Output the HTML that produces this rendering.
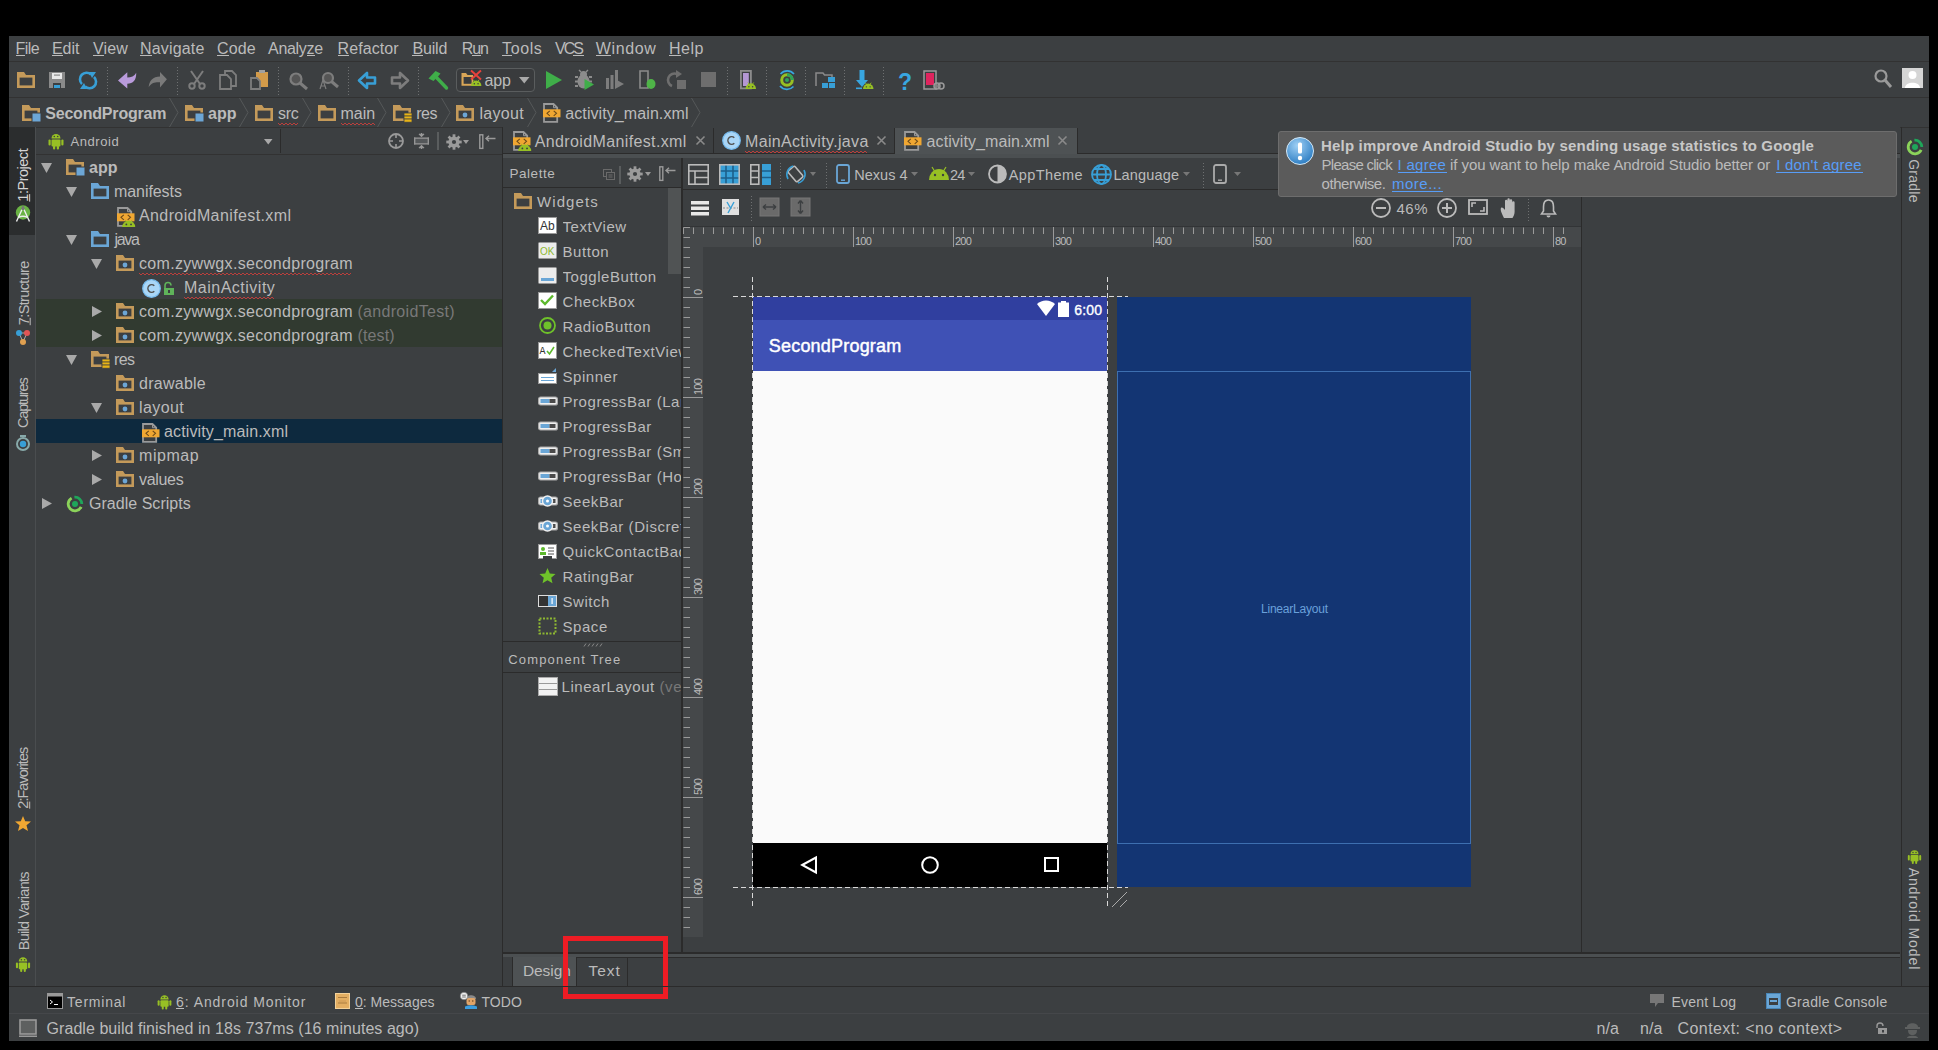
<!DOCTYPE html>
<html><head><meta charset="utf-8">
<style>
*{margin:0;padding:0;box-sizing:border-box}
html,body{width:1938px;height:1050px;overflow:hidden;background:#000}
body{font-family:"Liberation Sans",sans-serif;font-size:15px;color:#bbbbbb;position:relative}
.a{position:absolute}
.t{position:absolute;white-space:nowrap;line-height:1}
svg{overflow:visible}
</style></head><body>
<div class="a" style="left:9px;top:36px;width:1920px;height:1005px;background:#3c3f41;"></div>
<div class="a" style="left:9px;top:61px;width:1920px;height:1px;background:#323232;"></div>
<div class="a" style="left:9px;top:97px;width:1920px;height:1px;background:#323232;"></div>
<div class="a" style="left:9px;top:127px;width:1920px;height:1px;background:#323232;"></div>
<div class="t" style="left:15.50px;top:41.46px;font-size:16px;color:#bbbbbb;letter-spacing:-0.553px;">File</div>
<div class="a" style="left:15.5px;top:55px;width:9.8px;height:1px;background:#bbbbbb"></div>
<div class="t" style="left:52.00px;top:41.46px;font-size:16px;color:#bbbbbb;letter-spacing:-0.060px;">Edit</div>
<div class="a" style="left:52.0px;top:55px;width:10.7px;height:1px;background:#bbbbbb"></div>
<div class="t" style="left:93.00px;top:41.46px;font-size:16px;color:#bbbbbb;letter-spacing:0.113px;">View</div>
<div class="a" style="left:93.0px;top:55px;width:10.7px;height:1px;background:#bbbbbb"></div>
<div class="t" style="left:140.00px;top:41.46px;font-size:16px;color:#bbbbbb;letter-spacing:0.171px;">Navigate</div>
<div class="a" style="left:140.0px;top:55px;width:11.6px;height:1px;background:#bbbbbb"></div>
<div class="t" style="left:217.00px;top:41.46px;font-size:16px;color:#bbbbbb;letter-spacing:0.120px;">Code</div>
<div class="a" style="left:217.0px;top:55px;width:11.6px;height:1px;background:#bbbbbb"></div>
<div class="t" style="left:268.00px;top:41.46px;font-size:16px;color:#bbbbbb;letter-spacing:-0.293px;">Analyze</div>
<div class="a" style="left:306.6px;top:55px;width:8.0px;height:1px;background:#bbbbbb"></div>
<div class="t" style="left:337.50px;top:41.46px;font-size:16px;color:#bbbbbb;letter-spacing:0.089px;">Refactor</div>
<div class="a" style="left:337.5px;top:55px;width:11.6px;height:1px;background:#bbbbbb"></div>
<div class="t" style="left:412.40px;top:41.46px;font-size:16px;color:#bbbbbb;letter-spacing:-0.155px;">Build</div>
<div class="a" style="left:412.4px;top:55px;width:10.7px;height:1px;background:#bbbbbb"></div>
<div class="t" style="left:461.80px;top:41.46px;font-size:16px;color:#bbbbbb;letter-spacing:-1.140px;">Run</div>
<div class="a" style="left:472.2px;top:55px;width:8.9px;height:1px;background:#bbbbbb"></div>
<div class="t" style="left:502.00px;top:41.46px;font-size:16px;color:#bbbbbb;letter-spacing:0.630px;">Tools</div>
<div class="a" style="left:502.0px;top:55px;width:9.8px;height:1px;background:#bbbbbb"></div>
<div class="t" style="left:555.00px;top:41.46px;font-size:16px;color:#bbbbbb;letter-spacing:-2.030px;">VCS</div>
<div class="a" style="left:573.2px;top:55px;width:10.7px;height:1px;background:#bbbbbb"></div>
<div class="t" style="left:595.70px;top:41.46px;font-size:16px;color:#bbbbbb;letter-spacing:0.648px;">Window</div>
<div class="a" style="left:595.7px;top:55px;width:15.1px;height:1px;background:#bbbbbb"></div>
<div class="t" style="left:669.00px;top:41.46px;font-size:16px;color:#bbbbbb;letter-spacing:0.513px;">Help</div>
<div class="a" style="left:669.0px;top:55px;width:11.6px;height:1px;background:#bbbbbb"></div>
<svg class="a" style="left:17px;top:72px;" width="18" height="16" viewBox="0 0 18 16"><path d="M0,0 H7 L9,3 H18 V16 H0 Z" fill="#c49a5a"/><rect x="2.6" y="5.6" width="12.8" height="7.800000000000001" fill="#3c3f41"/></svg>
<svg class="a" style="left:49px;top:72px;" width="16" height="16" viewBox="0 0 16 16"><path d="M0,0 h16 v16 h-16 z" fill="#8a8a8a"/><rect x="3" y="1" width="10" height="6" fill="#e8e8e8"/><rect x="5" y="2.5" width="6" height="1.2" fill="#8a8a8a"/><rect x="4" y="11" width="8" height="5" fill="#3c3f41"/><rect x="5" y="13" width="6" height="3" fill="#389fd6"/></svg>
<svg class="a" style="left:79px;top:72px;" width="18" height="17" viewBox="0 0 18 17"><path d="M3,12 A6.5,6.5 0 0 1 12,2.5" fill="none" stroke="#389fd6" stroke-width="2.6"/><path d="M15,5 A6.5,6.5 0 0 1 6,14.5" fill="none" stroke="#389fd6" stroke-width="2.6"/><path d="M10,0 L17,0 L13,6 z" fill="#389fd6"/><path d="M8,17 L1,17 L5,11 z" fill="#389fd6"/></svg>
<svg class="a" style="left:107px;top:67px;" width="1" height="28" viewBox="0 0 1 28"><rect x="0" y="0" width="1" height="1" fill="#6e7071"/><rect x="0" y="3" width="1" height="1" fill="#6e7071"/><rect x="0" y="6" width="1" height="1" fill="#6e7071"/><rect x="0" y="9" width="1" height="1" fill="#6e7071"/><rect x="0" y="12" width="1" height="1" fill="#6e7071"/><rect x="0" y="15" width="1" height="1" fill="#6e7071"/><rect x="0" y="18" width="1" height="1" fill="#6e7071"/><rect x="0" y="21" width="1" height="1" fill="#6e7071"/><rect x="0" y="24" width="1" height="1" fill="#6e7071"/><rect x="0" y="27" width="1" height="1" fill="#6e7071"/></svg>
<svg class="a" style="left:118px;top:72px;" width="19" height="17" viewBox="0 0 19 17"><path d="M0,8.5 L9.3,0.3 V5.5 C13,5.5 16.5,4 18.2,0.7 C18.5,8 15,11.5 9.3,11.8 V16.4 Z" fill="#b99bdb"/></svg>
<svg class="a" style="left:148px;top:72px;" width="19" height="16" viewBox="0 0 19 16"><path d="M18.9,7.3 L12,0 V4.5 C5,4.5 1,9 0.7,15.3 C3,11 7,10 12,10.3 V15.5 Z" fill="#7a7a7a"/></svg>
<svg class="a" style="left:177px;top:67px;" width="1" height="28" viewBox="0 0 1 28"><rect x="0" y="0" width="1" height="1" fill="#6e7071"/><rect x="0" y="3" width="1" height="1" fill="#6e7071"/><rect x="0" y="6" width="1" height="1" fill="#6e7071"/><rect x="0" y="9" width="1" height="1" fill="#6e7071"/><rect x="0" y="12" width="1" height="1" fill="#6e7071"/><rect x="0" y="15" width="1" height="1" fill="#6e7071"/><rect x="0" y="18" width="1" height="1" fill="#6e7071"/><rect x="0" y="21" width="1" height="1" fill="#6e7071"/><rect x="0" y="24" width="1" height="1" fill="#6e7071"/><rect x="0" y="27" width="1" height="1" fill="#6e7071"/></svg>
<svg class="a" style="left:188px;top:71px;" width="18" height="19" viewBox="0 0 18 19"><g fill="none" stroke="#7d7d7d" stroke-width="2"><circle cx="4" cy="15" r="2.7"/><circle cx="14" cy="15" r="2.7"/><path d="M3,0 L12,13 M15,0 L6,13"/></g></svg>
<svg class="a" style="left:219px;top:70px;" width="19" height="20" viewBox="0 0 19 20"><g fill="#3c3f41" stroke="#7d7d7d" stroke-width="1.8"><path d="M6,1 h7 l4,4 v11 h-11 z"/><path d="M1,5 h7 l4,4 v10 h-11 z"/></g></svg>
<svg class="a" style="left:250px;top:70px;" width="18" height="20" viewBox="0 0 18 20"><rect x="6" y="2" width="12" height="15" fill="#d39b4a"/><rect x="9" y="0" width="6" height="3" fill="#a0a0a0"/><path d="M1,8 h6 l3,3 v8 h-9 z" fill="#3c3f41" stroke="#7d7d7d" stroke-width="1.8"/></svg>
<svg class="a" style="left:278px;top:67px;" width="1" height="28" viewBox="0 0 1 28"><rect x="0" y="0" width="1" height="1" fill="#6e7071"/><rect x="0" y="3" width="1" height="1" fill="#6e7071"/><rect x="0" y="6" width="1" height="1" fill="#6e7071"/><rect x="0" y="9" width="1" height="1" fill="#6e7071"/><rect x="0" y="12" width="1" height="1" fill="#6e7071"/><rect x="0" y="15" width="1" height="1" fill="#6e7071"/><rect x="0" y="18" width="1" height="1" fill="#6e7071"/><rect x="0" y="21" width="1" height="1" fill="#6e7071"/><rect x="0" y="24" width="1" height="1" fill="#6e7071"/><rect x="0" y="27" width="1" height="1" fill="#6e7071"/></svg>
<svg class="a" style="left:289px;top:72px;" width="19" height="17" viewBox="0 0 19 17"><circle cx="7" cy="7" r="5.5" fill="#555" stroke="#7d7d7d" stroke-width="2.2"/><path d="M11,11 L18,17" stroke="#7d7d7d" stroke-width="3"/></svg>
<svg class="a" style="left:319px;top:71px;" width="20" height="19" viewBox="0 0 20 19"><circle cx="9" cy="7" r="5" fill="#555" stroke="#7d7d7d" stroke-width="2.2"/><path d="M12.5,10.5 L19,16" stroke="#7d7d7d" stroke-width="3"/><path d="M1,18 L4,9 L7,18 M2.2,15 h3.6" fill="none" stroke="#7d7d7d" stroke-width="1.2"/></svg>
<svg class="a" style="left:348px;top:67px;" width="1" height="28" viewBox="0 0 1 28"><rect x="0" y="0" width="1" height="1" fill="#6e7071"/><rect x="0" y="3" width="1" height="1" fill="#6e7071"/><rect x="0" y="6" width="1" height="1" fill="#6e7071"/><rect x="0" y="9" width="1" height="1" fill="#6e7071"/><rect x="0" y="12" width="1" height="1" fill="#6e7071"/><rect x="0" y="15" width="1" height="1" fill="#6e7071"/><rect x="0" y="18" width="1" height="1" fill="#6e7071"/><rect x="0" y="21" width="1" height="1" fill="#6e7071"/><rect x="0" y="24" width="1" height="1" fill="#6e7071"/><rect x="0" y="27" width="1" height="1" fill="#6e7071"/></svg>
<svg class="a" style="left:359px;top:72px;" width="17" height="17" viewBox="0 0 17 17"><path d="M0,8.5 L8,1 V5.5 H16 V11.5 H8 V16 z" fill="none" stroke="#389fd6" stroke-width="2.6" stroke-linejoin="round"/></svg>
<svg class="a" style="left:391px;top:72px;" width="17" height="17" viewBox="0 0 17 17"><path d="M17,8.5 L9,1 V5.5 H1 V11.5 H9 V16 z" fill="none" stroke="#7d7d7d" stroke-width="2.6" stroke-linejoin="round"/></svg>
<svg class="a" style="left:418px;top:67px;" width="1" height="28" viewBox="0 0 1 28"><rect x="0" y="0" width="1" height="1" fill="#6e7071"/><rect x="0" y="3" width="1" height="1" fill="#6e7071"/><rect x="0" y="6" width="1" height="1" fill="#6e7071"/><rect x="0" y="9" width="1" height="1" fill="#6e7071"/><rect x="0" y="12" width="1" height="1" fill="#6e7071"/><rect x="0" y="15" width="1" height="1" fill="#6e7071"/><rect x="0" y="18" width="1" height="1" fill="#6e7071"/><rect x="0" y="21" width="1" height="1" fill="#6e7071"/><rect x="0" y="24" width="1" height="1" fill="#6e7071"/><rect x="0" y="27" width="1" height="1" fill="#6e7071"/></svg>
<svg class="a" style="left:428px;top:70px;" width="20" height="20" viewBox="0 0 20 20"><path d="M0.5,8.5 L7.5,1 L12.5,3.5 L10,6.5 L5.5,11 Z" fill="#3fae49"/><path d="M8.5,7.5 L18.5,18" stroke="#3fae49" stroke-width="3.4" stroke-linecap="round"/></svg>
<div class="a" style="left:456px;top:68px;width:79px;height:24px;border:1px solid #5a5d5e;border-radius:4px;background:#393b3d"></div>
<svg class="a" style="left:461px;top:70px;" width="21" height="17" viewBox="0 0 21 17"><path d="M0.5,3 H5 L6.5,5 H12 V15.8 H0.5 Z" fill="#d9a657"/><rect x="2.6" y="7" width="8" height="6.8" fill="#393b3d"/><path d="M10,16.0 A5.2,5.5 0 0 1 20.4,16.0 Z" fill="#97c024"/><path d="M12.288,9.7 L13.536000000000001,11.5 M18.112000000000002,9.7 L16.864,11.5" stroke="#97c024" stroke-width="0.9"/><circle cx="13.328" cy="13.8" r="0.7280000000000001" fill="#393b3d"/><circle cx="17.072000000000003" cy="13.8" r="0.7280000000000001" fill="#393b3d"/><path d="M10,0.5 L20,9.5 M20,0.5 L10,9.5" stroke="#e8413c" stroke-width="1.9"/></svg>
<div class="t" style="left:484.40px;top:73.46px;font-size:16px;color:#bbbbbb;letter-spacing:-0.060px;">app</div>
<svg class="a" style="left:519px;top:77px;" width="10.5" height="6.5" viewBox="0 0 10.5 6.5"><path d="M0,0 H10.5 L5.25,6.5 z" fill="#a9a9a9"/></svg>
<svg class="a" style="left:546px;top:71px;" width="16" height="18" viewBox="0 0 16 18"><path d="M0,0 L16,9 L0,18 z" fill="#3fae49"/></svg>
<svg class="a" style="left:575px;top:70px;" width="20" height="20" viewBox="0 0 20 20"><circle cx="8.5" cy="4.5" r="3.5" fill="#8c8c8c"/><ellipse cx="8.5" cy="11.5" rx="6" ry="7" fill="#8c8c8c"/><g fill="#8c8c8c"><rect x="0" y="6" width="3" height="2"/><rect x="0" y="10.5" width="3" height="2"/><rect x="0" y="15" width="3" height="2"/><rect x="14" y="6" width="3" height="2"/><rect x="14" y="10.5" width="3" height="2"/></g><path d="M4,0 L6,2 M13,0 L11,2" stroke="#8c8c8c" stroke-width="1.4"/><path d="M9.5,9 L19,14.5 L9.5,20 Z" fill="#3fae49"/></svg>
<svg class="a" style="left:606px;top:70px;" width="18" height="20" viewBox="0 0 18 20"><g fill="#7d7d7d"><rect x="0" y="8" width="3" height="11"/><rect x="4.5" y="5" width="3" height="14"/><rect x="9" y="0" width="3" height="12"/><path d="M9,9 L18,14 L9,19 z"/></g></svg>
<svg class="a" style="left:639px;top:70px;" width="17" height="20" viewBox="0 0 17 20"><path d="M1,1 h8 v17 h-8 z" fill="none" stroke="#8a8a8a" stroke-width="1.6"/><ellipse cx="12" cy="14" rx="4.5" ry="5" fill="#4fb448"/></svg>
<svg class="a" style="left:668px;top:70px;" width="19" height="20" viewBox="0 0 19 20"><path d="M9,4 A6,6 0 1 0 4,16" fill="none" stroke="#6e6e6e" stroke-width="2.6"/><path d="M8,0 L14,4 L8,8 z" fill="#6e6e6e"/><rect x="9" y="10" width="9" height="9" fill="#6e6e6e"/></svg>
<svg class="a" style="left:701px;top:72px;" width="15" height="15" viewBox="0 0 15 15"><rect width="15" height="15" fill="#6e6e6e"/></svg>
<svg class="a" style="left:727px;top:67px;" width="1" height="28" viewBox="0 0 1 28"><rect x="0" y="0" width="1" height="1" fill="#6e7071"/><rect x="0" y="3" width="1" height="1" fill="#6e7071"/><rect x="0" y="6" width="1" height="1" fill="#6e7071"/><rect x="0" y="9" width="1" height="1" fill="#6e7071"/><rect x="0" y="12" width="1" height="1" fill="#6e7071"/><rect x="0" y="15" width="1" height="1" fill="#6e7071"/><rect x="0" y="18" width="1" height="1" fill="#6e7071"/><rect x="0" y="21" width="1" height="1" fill="#6e7071"/><rect x="0" y="24" width="1" height="1" fill="#6e7071"/><rect x="0" y="27" width="1" height="1" fill="#6e7071"/></svg>
<svg class="a" style="left:740px;top:70px;" width="17" height="20" viewBox="0 0 17 20"><rect x="0.9" y="0.9" width="10" height="17.5" fill="#3c3f41" stroke="#8c8c8c" stroke-width="1.8"/><rect x="3" y="3" width="5.8" height="13" fill="#b497d4"/><path d="M5.5,18.9 A5.25,5.6 0 0 1 16.0,18.9 Z" fill="#97c024"/><path d="M7.8100000000000005,12.5 L9.07,14.3 M13.69,12.5 L12.43,14.3" stroke="#97c024" stroke-width="0.9"/><circle cx="8.86" cy="16.66" r="0.7350000000000001" fill="#3c3f41"/><circle cx="12.64" cy="16.66" r="0.7350000000000001" fill="#3c3f41"/></svg>
<svg class="a" style="left:766px;top:67px;" width="1" height="28" viewBox="0 0 1 28"><rect x="0" y="0" width="1" height="1" fill="#6e7071"/><rect x="0" y="3" width="1" height="1" fill="#6e7071"/><rect x="0" y="6" width="1" height="1" fill="#6e7071"/><rect x="0" y="9" width="1" height="1" fill="#6e7071"/><rect x="0" y="12" width="1" height="1" fill="#6e7071"/><rect x="0" y="15" width="1" height="1" fill="#6e7071"/><rect x="0" y="18" width="1" height="1" fill="#6e7071"/><rect x="0" y="21" width="1" height="1" fill="#6e7071"/><rect x="0" y="24" width="1" height="1" fill="#6e7071"/><rect x="0" y="27" width="1" height="1" fill="#6e7071"/></svg>
<svg class="a" style="left:778px;top:70px;" width="18" height="20" viewBox="0 0 18 20"><path d="M2.5,4 A9,9 0 0 1 16,4" fill="none" stroke="#38a6e0" stroke-width="1.7"/><path d="M2,16 A9,9 0 0 0 15.5,16.5" fill="none" stroke="#38a6e0" stroke-width="1.7"/><circle cx="9" cy="10" r="5.3" fill="none" stroke="#97c024" stroke-width="3"/><path d="M9,4.7 A5.3,5.3 0 0 1 14.3,10" fill="none" stroke="#2ea35a" stroke-width="3"/><circle cx="9" cy="10" r="2" fill="#2ea35a"/></svg>
<svg class="a" style="left:805px;top:67px;" width="1" height="28" viewBox="0 0 1 28"><rect x="0" y="0" width="1" height="1" fill="#6e7071"/><rect x="0" y="3" width="1" height="1" fill="#6e7071"/><rect x="0" y="6" width="1" height="1" fill="#6e7071"/><rect x="0" y="9" width="1" height="1" fill="#6e7071"/><rect x="0" y="12" width="1" height="1" fill="#6e7071"/><rect x="0" y="15" width="1" height="1" fill="#6e7071"/><rect x="0" y="18" width="1" height="1" fill="#6e7071"/><rect x="0" y="21" width="1" height="1" fill="#6e7071"/><rect x="0" y="24" width="1" height="1" fill="#6e7071"/><rect x="0" y="27" width="1" height="1" fill="#6e7071"/></svg>
<svg class="a" style="left:815px;top:72px;" width="21" height="16" viewBox="0 0 21 16"><path d="M1,14 V1 H8 L9.5,3 H17 V6" fill="none" stroke="#8a8a8a" stroke-width="1.5"/><g fill="#389fd6"><rect x="13" y="5" width="7" height="5"/><rect x="7" y="11" width="6" height="5"/><rect x="14" y="11" width="6" height="5"/></g></svg>
<svg class="a" style="left:844px;top:67px;" width="1" height="28" viewBox="0 0 1 28"><rect x="0" y="0" width="1" height="1" fill="#6e7071"/><rect x="0" y="3" width="1" height="1" fill="#6e7071"/><rect x="0" y="6" width="1" height="1" fill="#6e7071"/><rect x="0" y="9" width="1" height="1" fill="#6e7071"/><rect x="0" y="12" width="1" height="1" fill="#6e7071"/><rect x="0" y="15" width="1" height="1" fill="#6e7071"/><rect x="0" y="18" width="1" height="1" fill="#6e7071"/><rect x="0" y="21" width="1" height="1" fill="#6e7071"/><rect x="0" y="24" width="1" height="1" fill="#6e7071"/><rect x="0" y="27" width="1" height="1" fill="#6e7071"/></svg>
<svg class="a" style="left:856px;top:70px;" width="18" height="20" viewBox="0 0 18 20"><path d="M3.5,0 H8.5 V10 H12 L6,17 L0,10 H3.5 Z" fill="#38a6e0"/><rect x="0" y="17.5" width="6" height="1.6" fill="#38a6e0"/><path d="M7,19.1 A5.25,5.6 0 0 1 17.5,19.1 Z" fill="#97c024"/><path d="M9.31,12.7 L10.57,14.5 M15.19,12.7 L13.93,14.5" stroke="#97c024" stroke-width="0.9"/><circle cx="10.36" cy="16.86" r="0.7350000000000001" fill="#3c3f41"/><circle cx="14.14" cy="16.86" r="0.7350000000000001" fill="#3c3f41"/></svg>
<svg class="a" style="left:883px;top:67px;" width="1" height="28" viewBox="0 0 1 28"><rect x="0" y="0" width="1" height="1" fill="#6e7071"/><rect x="0" y="3" width="1" height="1" fill="#6e7071"/><rect x="0" y="6" width="1" height="1" fill="#6e7071"/><rect x="0" y="9" width="1" height="1" fill="#6e7071"/><rect x="0" y="12" width="1" height="1" fill="#6e7071"/><rect x="0" y="15" width="1" height="1" fill="#6e7071"/><rect x="0" y="18" width="1" height="1" fill="#6e7071"/><rect x="0" y="21" width="1" height="1" fill="#6e7071"/><rect x="0" y="24" width="1" height="1" fill="#6e7071"/><rect x="0" y="27" width="1" height="1" fill="#6e7071"/></svg>
<div class="t" style="left:898.00px;top:70.53px;font-size:23px;color:#38a6e0;letter-spacing:-2.530px;font-weight:bold;">?</div>
<svg class="a" style="left:923px;top:70px;" width="21" height="20" viewBox="0 0 21 20"><rect x="1" y="1" width="12" height="18" fill="#3c3f41" stroke="#9a9a9a" stroke-width="1.5"/><rect x="3" y="3" width="8" height="12" fill="#e0245e"/><circle cx="14" cy="16" r="3" fill="none" stroke="#9a9a9a" stroke-width="1.5"/><circle cx="18" cy="16" r="3" fill="none" stroke="#9a9a9a" stroke-width="1.5"/></svg>
<svg class="a" style="left:1874px;top:69px;" width="18" height="19" viewBox="0 0 18 19"><circle cx="7" cy="7" r="5.5" fill="none" stroke="#9a9a9a" stroke-width="2.2"/><path d="M11,11 L17,18" stroke="#9a9a9a" stroke-width="3"/></svg>
<svg class="a" style="left:1902px;top:68px;" width="21" height="20" viewBox="0 0 21 20"><rect width="21" height="20" fill="#d5d5d5"/><circle cx="10.5" cy="7" r="4" fill="#fff"/><path d="M3,20 C3,13 18,13 18,20 z" fill="#fff"/></svg>
<svg class="a" style="left:22px;top:105px;" width="18" height="16" viewBox="0 0 18 16"><path d="M0,0 H7 L9,3 H18 V16 H0 Z" fill="#c49a5a"/><rect x="2.6" y="5.6" width="12.8" height="7.800000000000001" fill="#3c3f41"/><rect x="10" y="8" width="9" height="9" fill="#6ca6d6" stroke="#3c3f41" stroke-width="1"/></svg>
<div class="t" style="left:45.20px;top:106.46px;font-size:16px;color:#bbbbbb;letter-spacing:-0.185px;font-weight:bold;">SecondProgram</div>
<svg class="a" style="left:169px;top:98px;" width="10" height="29" viewBox="0 0 10 29"><path d="M0.5,0 L9,14.5 L0.5,29" fill="none" stroke="#555859" stroke-width="1"/></svg>
<svg class="a" style="left:185px;top:105px;" width="18" height="16" viewBox="0 0 18 16"><path d="M0,0 H7 L9,3 H18 V16 H0 Z" fill="#c49a5a"/><rect x="2.6" y="5.6" width="12.8" height="7.800000000000001" fill="#3c3f41"/><rect x="10" y="8" width="9" height="9" fill="#6ca6d6" stroke="#3c3f41" stroke-width="1"/></svg>
<div class="t" style="left:208.00px;top:106.46px;font-size:16px;color:#bbbbbb;letter-spacing:0.060px;font-weight:bold;">app</div>
<svg class="a" style="left:239px;top:98px;" width="10" height="29" viewBox="0 0 10 29"><path d="M0.5,0 L9,14.5 L0.5,29" fill="none" stroke="#555859" stroke-width="1"/></svg>
<svg class="a" style="left:255px;top:105px;" width="18" height="16" viewBox="0 0 18 16"><path d="M0,0 H7 L9,3 H18 V16 H0 Z" fill="#c49a5a"/><rect x="2.6" y="5.6" width="12.8" height="7.800000000000001" fill="#3c3f41"/></svg>
<div class="t" style="left:278.00px;top:106.46px;font-size:16px;color:#bbbbbb;letter-spacing:-0.240px;">src</div>
<svg class="a" style="left:278.0px;top:123px" width="23" height="3"><polyline points="0.0,0 2.0,2 4.0,0 6.0,2 8.0,0 10.0,2 12.0,0 14.0,2 16.0,0 18.0,2 20.0,0" fill="none" stroke="#bc3f3c" stroke-width="1"/></svg>
<svg class="a" style="left:301.5px;top:98px;" width="10" height="29" viewBox="0 0 10 29"><path d="M0.5,0 L9,14.5 L0.5,29" fill="none" stroke="#555859" stroke-width="1"/></svg>
<svg class="a" style="left:317.5px;top:105px;" width="18" height="16" viewBox="0 0 18 16"><path d="M0,0 H7 L9,3 H18 V16 H0 Z" fill="#c49a5a"/><rect x="2.6" y="5.6" width="12.8" height="7.800000000000001" fill="#3c3f41"/></svg>
<div class="t" style="left:340.60px;top:106.46px;font-size:16px;color:#bbbbbb;letter-spacing:-0.073px;">main</div>
<svg class="a" style="left:340.6px;top:123px" width="36" height="3"><polyline points="0.0,0 2.0,2 4.0,0 6.0,2 8.0,0 10.0,2 12.0,0 14.0,2 16.0,0 18.0,2 20.0,0 22.0,2 24.0,0 26.0,2 28.0,0 30.0,2 32.0,0 34.0,2" fill="none" stroke="#bc3f3c" stroke-width="1"/></svg>
<svg class="a" style="left:377px;top:98px;" width="10" height="29" viewBox="0 0 10 29"><path d="M0.5,0 L9,14.5 L0.5,29" fill="none" stroke="#555859" stroke-width="1"/></svg>
<svg class="a" style="left:393px;top:105px;" width="18" height="16" viewBox="0 0 18 16"><path d="M0,0 H7 L9,3 H18 V16 H0 Z" fill="#c49a5a"/><rect x="2.6" y="5.6" width="12.8" height="7.800000000000001" fill="#3c3f41"/><g fill="#e8b416" stroke="#3c3f41" stroke-width="0.8"><rect x="11" y="8" width="8" height="3.2"/><rect x="11" y="11" width="8" height="3.2"/><rect x="11" y="14" width="8" height="3.2"/></g></svg>
<div class="t" style="left:416.30px;top:106.46px;font-size:16px;color:#bbbbbb;letter-spacing:-0.520px;">res</div>
<svg class="a" style="left:441px;top:98px;" width="10" height="29" viewBox="0 0 10 29"><path d="M0.5,0 L9,14.5 L0.5,29" fill="none" stroke="#555859" stroke-width="1"/></svg>
<svg class="a" style="left:455.5px;top:105px;" width="18" height="16" viewBox="0 0 18 16"><path d="M0,0 H7 L9,3 H18 V16 H0 Z" fill="#c49a5a"/><rect x="2.6" y="5.6" width="12.8" height="7.800000000000001" fill="#3c3f41"/><circle cx="9" cy="10" r="2.4" fill="#6ca6d6"/></svg>
<div class="t" style="left:479.40px;top:106.46px;font-size:16px;color:#bbbbbb;letter-spacing:0.316px;">layout</div>
<svg class="a" style="left:527px;top:98px;" width="10" height="29" viewBox="0 0 10 29"><path d="M0.5,0 L9,14.5 L0.5,29" fill="none" stroke="#555859" stroke-width="1"/></svg>
<svg class="a" style="left:543px;top:103px;" width="18" height="20" viewBox="0 0 18 20"><path d="M1,1 H10.5 L14.2,4.7 V18.8 H1 Z" fill="#3c3f41" stroke="#9a9a9a" stroke-width="1.8"/><path d="M10.5,1 V4.7 H14.2" fill="none" stroke="#9a9a9a" stroke-width="1"/><rect x="0" y="6.3" width="17.5" height="8" fill="#f0a732"/><path d="M6.8,7.8 L4,10.3 L6.8,12.8 M10.7,7.8 L13.5,10.3 L10.7,12.8" fill="none" stroke="#6b4a1a" stroke-width="1.1"/></svg>
<div class="t" style="left:565.30px;top:106.46px;font-size:16px;color:#bbbbbb;letter-spacing:0.084px;">activity_main.xml</div>
<svg class="a" style="left:691px;top:98px;" width="10" height="29" viewBox="0 0 10 29"><path d="M0.5,0 L9,14.5 L0.5,29" fill="none" stroke="#555859" stroke-width="1"/></svg>
<div class="a" style="left:35px;top:127px;width:1px;height:860px;background:#4a4d4f;"></div>
<div class="a" style="left:9px;top:127px;width:26px;height:108px;background:#2b2d2e;"></div>
<div class="t" style="left:-2.9px;top:168.1px;width:52.8px;height:14.5px;font-size:14.5px;line-height:14.5px;letter-spacing:-0.49px;color:#d4d4d4;text-align:center;transform:rotate(-90deg);"><u>1</u>:Project</div>
<svg class="a" style="left:15px;top:205px;" width="17" height="17" viewBox="0 0 17 17"><circle cx="8" cy="7.5" r="7.2" fill="#6ab344"/><path d="M7,4.5 L1.5,16.5 M9,4.5 L14.5,16.5 M3.5,12.5 Q8,10 12.5,12.5" fill="none" stroke="#eeeeee" stroke-width="1.4"/><circle cx="8" cy="3.5" r="1.7" fill="#777"/><rect x="7.2" y="1" width="1.6" height="1.8" fill="#777"/></svg>
<div class="t" style="left:-8.4px;top:285.5px;width:63.9px;height:14.5px;font-size:14.5px;line-height:14.5px;letter-spacing:-0.64px;color:#bbbbbb;text-align:center;transform:rotate(-90deg);"><u>7</u>:Structure</div>
<svg class="a" style="left:15px;top:329px;" width="16" height="16" viewBox="0 0 16 16"><path d="M4,4 L8,13 L12,4 Z" fill="none" stroke="#aaa" stroke-width="1"/><circle cx="4" cy="4" r="3" fill="#389fd6"/><circle cx="12" cy="4" r="3" fill="#e05555"/><circle cx="8" cy="13" r="3" fill="#e0a050"/></svg>
<div class="t" style="left:-1.2px;top:396.4px;width:49.4px;height:14.5px;font-size:14.5px;line-height:14.5px;letter-spacing:-1.18px;color:#bbbbbb;text-align:center;transform:rotate(-90deg);">Captures</div>
<svg class="a" style="left:15px;top:435px;" width="16" height="16" viewBox="0 0 16 16"><circle cx="8" cy="9" r="6" fill="none" stroke="#8aa" stroke-width="2"/><circle cx="8" cy="9" r="3.2" fill="#389fd6"/><rect x="5" y="0" width="6" height="2" fill="#8aa"/></svg>
<div class="t" style="left:-7.0px;top:771.3px;width:60.9px;height:14.5px;font-size:14.5px;line-height:14.5px;letter-spacing:-0.98px;color:#bbbbbb;text-align:center;transform:rotate(-90deg);"><u>2</u>:Favorites</div>
<svg class="a" style="left:15px;top:816px;" width="16" height="15" viewBox="0 0 16 15"><path d="M8,0 L10.2,5.2 L16,5.6 L11.5,9.3 L13,15 L8,12 L3,15 L4.5,9.3 L0,5.6 L5.8,5.2 z" fill="#f0a732"/></svg>
<div class="t" style="left:-15.4px;top:903.5px;width:77.8px;height:14.5px;font-size:14.5px;line-height:14.5px;letter-spacing:-0.75px;color:#bbbbbb;text-align:center;transform:rotate(-90deg);">Build Variants</div>
<svg class="a" style="left:15px;top:955px;width:16px;height:17px" width="16" height="18" viewBox="0 0 16 18"><g fill="#97c024"><path d="M3.5,7 a4.5,4.5 0 0 1 9,0 z"/><rect x="3.5" y="8" width="9" height="7" rx="1"/><rect x="0.5" y="8" width="2.2" height="6" rx="1.1"/><rect x="13.3" y="8" width="2.2" height="6" rx="1.1"/><rect x="5" y="14" width="2.2" height="4" rx="1"/><rect x="8.8" y="14" width="2.2" height="4" rx="1"/></g><circle cx="6.3" cy="5" r="0.8" fill="#3c3f41"/><circle cx="9.7" cy="5" r="0.8" fill="#3c3f41"/></svg>
<div class="a" style="left:502px;top:127px;width:1px;height:860px;background:#2b2b2b;"></div>
<div class="a" style="left:36px;top:154px;width:466px;height:1px;background:#323232;"></div>
<svg class="a" style="left:48px;top:131px;width:16px;height:19px" width="16" height="18" viewBox="0 0 16 18"><g fill="#97c024"><path d="M3.5,7 a4.5,4.5 0 0 1 9,0 z"/><rect x="3.5" y="8" width="9" height="7" rx="1"/><rect x="0.5" y="8" width="2.2" height="6" rx="1.1"/><rect x="13.3" y="8" width="2.2" height="6" rx="1.1"/><rect x="5" y="14" width="2.2" height="4" rx="1"/><rect x="8.8" y="14" width="2.2" height="4" rx="1"/></g><circle cx="6.3" cy="5" r="0.8" fill="#3c3f41"/><circle cx="9.7" cy="5" r="0.8" fill="#3c3f41"/></svg>
<div class="t" style="left:70.40px;top:135.00px;font-size:13px;color:#bbbbbb;letter-spacing:0.592px;">Android</div>
<svg class="a" style="left:264px;top:139px;" width="8.5" height="5.5" viewBox="0 0 8.5 5.5"><path d="M0,0 H8.5 L4.25,5.5 z" fill="#a9a9a9"/></svg>
<div class="a" style="left:280px;top:129px;width:1px;height:24px;background:#2b2b2b;"></div>
<svg class="a" style="left:388px;top:133px;" width="17" height="17" viewBox="0 0 17 17"><circle cx="8" cy="8" r="7" fill="none" stroke="#9a9a9a" stroke-width="1.8"/><path d="M8,1.5 V5 M8,11 V14.5 M1.5,8 H5 M11,8 H14.5" stroke="#9a9a9a" stroke-width="1.6"/></svg>
<svg class="a" style="left:414px;top:133px;" width="15" height="17" viewBox="0 0 15 17"><rect x="1" y="5.5" width="13" height="5" fill="#55585a"/><path d="M0.7,5.2 H14.3 M0.7,10.8 H14.3 M0.7,4.2 V11.8 M14.3,4.2 V11.8" fill="none" stroke="#9a9a9a" stroke-width="1.3"/><path d="M7.5,0 V2 M5,1.2 H10 L7.5,3.8 Z M7.5,16 V14 M5,14.8 H10 L7.5,12.2 Z" fill="#9a9a9a" stroke="#9a9a9a" stroke-width="1"/></svg>
<div class="a" style="left:437px;top:132px;width:2px;height:18px;background:#5a5d5e;"></div>
<svg class="a" style="left:446px;top:134px;" width="16" height="16" viewBox="0 0 16 16"><rect x="6.6" y="0.3" width="2.8" height="4" transform="rotate(0 8 8)" fill="#9a9a9a"/><rect x="6.6" y="0.3" width="2.8" height="4" transform="rotate(45 8 8)" fill="#9a9a9a"/><rect x="6.6" y="0.3" width="2.8" height="4" transform="rotate(90 8 8)" fill="#9a9a9a"/><rect x="6.6" y="0.3" width="2.8" height="4" transform="rotate(135 8 8)" fill="#9a9a9a"/><rect x="6.6" y="0.3" width="2.8" height="4" transform="rotate(180 8 8)" fill="#9a9a9a"/><rect x="6.6" y="0.3" width="2.8" height="4" transform="rotate(225 8 8)" fill="#9a9a9a"/><rect x="6.6" y="0.3" width="2.8" height="4" transform="rotate(270 8 8)" fill="#9a9a9a"/><rect x="6.6" y="0.3" width="2.8" height="4" transform="rotate(315 8 8)" fill="#9a9a9a"/><circle cx="8" cy="8" r="5.6" fill="#9a9a9a"/><circle cx="8" cy="8" r="2.1" fill="#3c3f41"/></svg>
<svg class="a" style="left:463px;top:140px;" width="6" height="4" viewBox="0 0 6 4"><path d="M0,0 H6 L3,4 z" fill="#9a9a9a"/></svg>
<svg class="a" style="left:479px;top:134px;" width="17" height="16" viewBox="0 0 17 16"><rect x="0.8" y="0.8" width="3" height="13.6" fill="none" stroke="#9a9a9a" stroke-width="1.4"/><path d="M16.5,4.5 H7 M10,1.8 L7,4.5 L10,7.2" fill="none" stroke="#9a9a9a" stroke-width="1.4"/></svg>
<svg class="a" style="left:41px;top:163px;" width="11" height="10" viewBox="0 0 11 10"><path d="M0,0 H11 L5.5,10 z" fill="#a9a9a9"/></svg>
<svg class="a" style="left:66px;top:159px;" width="18" height="16" viewBox="0 0 18 16"><path d="M0,0 H7 L9,3 H18 V16 H0 Z" fill="#c49a5a"/><rect x="2.6" y="5.6" width="12.8" height="7.800000000000001" fill="#3c3f41"/><rect x="10" y="8" width="9" height="9" fill="#6ca6d6" stroke="#3c3f41" stroke-width="1"/></svg>
<div class="t" style="left:89.00px;top:160.46px;font-size:16px;color:#bbbbbb;letter-spacing:0.010px;font-weight:bold;">app</div>
<svg class="a" style="left:66px;top:187px;" width="11" height="10" viewBox="0 0 11 10"><path d="M0,0 H11 L5.5,10 z" fill="#a9a9a9"/></svg>
<svg class="a" style="left:91px;top:183px;" width="18" height="16" viewBox="0 0 18 16"><path d="M0,0 H7 L9,3 H18 V16 H0 Z" fill="#6aa6d6"/><rect x="2.6" y="5.6" width="12.8" height="7.800000000000001" fill="#3c3f41"/></svg>
<div class="t" style="left:114.00px;top:184.46px;font-size:16px;color:#bbbbbb;letter-spacing:-0.072px;">manifests</div>
<svg class="a" style="left:117px;top:207px;" width="18" height="20" viewBox="0 0 18 20"><path d="M1,1 H10.5 L14.2,4.7 V18.8 H1 Z" fill="#3c3f41" stroke="#9a9a9a" stroke-width="1.8"/><path d="M10.5,1 V4.7 H14.2" fill="none" stroke="#9a9a9a" stroke-width="1"/><rect x="0" y="6.3" width="17.5" height="8" fill="#f0a732"/><path d="M6.8,7.8 L4,10.3 L6.8,12.8 M10.7,7.8 L13.5,10.3 L10.7,12.8" fill="none" stroke="#6b4a1a" stroke-width="1.1"/><path d="M5.2,20.0 A6.5,6.4 0 0 1 18.2,20.0 Z" fill="#97c024"/><path d="M8.06,12.799999999999999 L9.620000000000001,14.6 M15.34,12.799999999999999 L13.780000000000001,14.6" stroke="#97c024" stroke-width="0.9"/><circle cx="9.36" cy="17.439999999999998" r="0.9100000000000001" fill="#3c3f41"/><circle cx="14.04" cy="17.439999999999998" r="0.9100000000000001" fill="#3c3f41"/></svg>
<div class="t" style="left:139.00px;top:208.46px;font-size:16px;color:#bbbbbb;letter-spacing:0.391px;">AndroidManifest.xml</div>
<svg class="a" style="left:66px;top:235px;" width="11" height="10" viewBox="0 0 11 10"><path d="M0,0 H11 L5.5,10 z" fill="#a9a9a9"/></svg>
<svg class="a" style="left:91px;top:231px;" width="18" height="16" viewBox="0 0 18 16"><path d="M0,0 H7 L9,3 H18 V16 H0 Z" fill="#6aa6d6"/><rect x="2.6" y="5.6" width="12.8" height="7.800000000000001" fill="#3c3f41"/></svg>
<div class="t" style="left:114.48px;top:232.46px;font-size:16px;color:#bbbbbb;letter-spacing:-1.307px;">java</div>
<svg class="a" style="left:91px;top:259px;" width="11" height="10" viewBox="0 0 11 10"><path d="M0,0 H11 L5.5,10 z" fill="#a9a9a9"/></svg>
<svg class="a" style="left:116px;top:255px;" width="18" height="16" viewBox="0 0 18 16"><path d="M0,0 H7 L9,3 H18 V16 H0 Z" fill="#c49a5a"/><rect x="2.6" y="5.6" width="12.8" height="7.800000000000001" fill="#3c3f41"/><circle cx="9" cy="10" r="2.4" fill="#6ca6d6"/></svg>
<div class="t" style="left:139.00px;top:256.46px;font-size:16px;color:#bbbbbb;letter-spacing:0.320px;">com.zywwgx.secondprogram</div>
<svg class="a" style="left:139.0px;top:273px" width="216" height="3"><polyline points="0.0,0 2.0,2 4.0,0 6.0,2 8.0,0 10.0,2 12.0,0 14.0,2 16.0,0 18.0,2 20.0,0 22.0,2 24.0,0 26.0,2 28.0,0 30.0,2 32.0,0 34.0,2 36.0,0 38.0,2 40.0,0 42.0,2 44.0,0 46.0,2 48.0,0 50.0,2 52.0,0 54.0,2 56.0,0 58.0,2 60.0,0 62.0,2 64.0,0 66.0,2 68.0,0 70.0,2 72.0,0 74.0,2 76.0,0 78.0,2 80.0,0 82.0,2 84.0,0 86.0,2 88.0,0 90.0,2 92.0,0 94.0,2 96.0,0 98.0,2 100.0,0 102.0,2 104.0,0 106.0,2 108.0,0 110.0,2 112.0,0 114.0,2 116.0,0 118.0,2 120.0,0 122.0,2 124.0,0 126.0,2 128.0,0 130.0,2 132.0,0 134.0,2 136.0,0 138.0,2 140.0,0 142.0,2 144.0,0 146.0,2 148.0,0 150.0,2 152.0,0 154.0,2 156.0,0 158.0,2 160.0,0 162.0,2 164.0,0 166.0,2 168.0,0 170.0,2 172.0,0 174.0,2 176.0,0 178.0,2 180.0,0 182.0,2 184.0,0 186.0,2 188.0,0 190.0,2 192.0,0 194.0,2 196.0,0 198.0,2 200.0,0 202.0,2 204.0,0 206.0,2 208.0,0 210.0,2 212.0,0" fill="none" stroke="#bc3f3c" stroke-width="1"/></svg>
<svg class="a" style="left:142px;top:279px;" width="19" height="19" viewBox="0 0 19 19"><circle cx="9.5" cy="9.5" r="8.8" fill="#a9d6f7" stroke="#78bdf0" stroke-width="1.2"/><path d="M12.3,6.7 A3.8,3.8 0 1 0 12.3,12.3" fill="none" stroke="#505050" stroke-width="1.5"/></svg>
<svg class="a" style="left:163px;top:282px;" width="11" height="13" viewBox="0 0 11 13"><path d="M2,6 V3.5 A3,3 0 0 1 8,3.5" fill="none" stroke="#5fb35a" stroke-width="1.6"/><rect x="1" y="6" width="10" height="7" fill="#5fb35a"/><rect x="5" y="8" width="2" height="3" fill="#3c3f41"/></svg>
<div class="t" style="left:184.00px;top:280.46px;font-size:16px;color:#bbbbbb;letter-spacing:0.502px;">MainActivity</div>
<svg class="a" style="left:184.0px;top:297px" width="93" height="3"><polyline points="0.0,0 2.0,2 4.0,0 6.0,2 8.0,0 10.0,2 12.0,0 14.0,2 16.0,0 18.0,2 20.0,0 22.0,2 24.0,0 26.0,2 28.0,0 30.0,2 32.0,0 34.0,2 36.0,0 38.0,2 40.0,0 42.0,2 44.0,0 46.0,2 48.0,0 50.0,2 52.0,0 54.0,2 56.0,0 58.0,2 60.0,0 62.0,2 64.0,0 66.0,2 68.0,0 70.0,2 72.0,0 74.0,2 76.0,0 78.0,2 80.0,0 82.0,2 84.0,0 86.0,2 88.0,0 90.0,2" fill="none" stroke="#bc3f3c" stroke-width="1"/></svg>
<div class="a" style="left:36px;top:299px;width:466px;height:24px;background:#313a30;"></div>
<svg class="a" style="left:92px;top:306px;" width="10" height="11" viewBox="0 0 10 11"><path d="M0,0 V11 L10,5.5 z" fill="#a9a9a9"/></svg>
<svg class="a" style="left:116px;top:303px;" width="18" height="16" viewBox="0 0 18 16"><path d="M0,0 H7 L9,3 H18 V16 H0 Z" fill="#c49a5a"/><rect x="2.6" y="5.6" width="12.8" height="7.800000000000001" fill="#3c3f41"/><circle cx="9" cy="10" r="2.4" fill="#6ca6d6"/></svg>
<div class="t" style="left:139.00px;top:304.46px;font-size:16px;color:#bbbbbb;letter-spacing:0.320px;">com.zywwgx.secondprogram</div>
<div class="t" style="left:357.40px;top:304.46px;font-size:16px;color:#787878;letter-spacing:0.322px;">(androidTest)</div>
<div class="a" style="left:36px;top:323px;width:466px;height:24px;background:#313a30;"></div>
<svg class="a" style="left:92px;top:330px;" width="10" height="11" viewBox="0 0 10 11"><path d="M0,0 V11 L10,5.5 z" fill="#a9a9a9"/></svg>
<svg class="a" style="left:116px;top:327px;" width="18" height="16" viewBox="0 0 18 16"><path d="M0,0 H7 L9,3 H18 V16 H0 Z" fill="#c49a5a"/><rect x="2.6" y="5.6" width="12.8" height="7.800000000000001" fill="#3c3f41"/><circle cx="9" cy="10" r="2.4" fill="#6ca6d6"/></svg>
<div class="t" style="left:139.00px;top:328.46px;font-size:16px;color:#bbbbbb;letter-spacing:0.320px;">com.zywwgx.secondprogram</div>
<div class="t" style="left:357.40px;top:328.46px;font-size:16px;color:#787878;letter-spacing:0.164px;">(test)</div>
<svg class="a" style="left:66px;top:355px;" width="11" height="10" viewBox="0 0 11 10"><path d="M0,0 H11 L5.5,10 z" fill="#a9a9a9"/></svg>
<svg class="a" style="left:91px;top:351px;" width="18" height="16" viewBox="0 0 18 16"><path d="M0,0 H7 L9,3 H18 V16 H0 Z" fill="#c49a5a"/><rect x="2.6" y="5.6" width="12.8" height="7.800000000000001" fill="#3c3f41"/><g fill="#e8b416" stroke="#3c3f41" stroke-width="0.8"><rect x="11" y="8" width="8" height="3.2"/><rect x="11" y="11" width="8" height="3.2"/><rect x="11" y="14" width="8" height="3.2"/></g></svg>
<div class="t" style="left:114.00px;top:352.46px;font-size:16px;color:#bbbbbb;letter-spacing:-0.620px;">res</div>
<svg class="a" style="left:116px;top:375px;" width="18" height="16" viewBox="0 0 18 16"><path d="M0,0 H7 L9,3 H18 V16 H0 Z" fill="#c49a5a"/><rect x="2.6" y="5.6" width="12.8" height="7.800000000000001" fill="#3c3f41"/><circle cx="9" cy="10" r="2.4" fill="#6ca6d6"/></svg>
<div class="t" style="left:139.00px;top:376.46px;font-size:16px;color:#bbbbbb;letter-spacing:0.263px;">drawable</div>
<svg class="a" style="left:91px;top:403px;" width="11" height="10" viewBox="0 0 11 10"><path d="M0,0 H11 L5.5,10 z" fill="#a9a9a9"/></svg>
<svg class="a" style="left:116px;top:399px;" width="18" height="16" viewBox="0 0 18 16"><path d="M0,0 H7 L9,3 H18 V16 H0 Z" fill="#c49a5a"/><rect x="2.6" y="5.6" width="12.8" height="7.800000000000001" fill="#3c3f41"/><circle cx="9" cy="10" r="2.4" fill="#6ca6d6"/></svg>
<div class="t" style="left:139.00px;top:400.46px;font-size:16px;color:#bbbbbb;letter-spacing:0.396px;">layout</div>
<div class="a" style="left:36px;top:419px;width:466px;height:24px;background:#0d293e;"></div>
<svg class="a" style="left:142px;top:423px;" width="18" height="20" viewBox="0 0 18 20"><path d="M1,1 H10.5 L14.2,4.7 V18.8 H1 Z" fill="#3c3f41" stroke="#9a9a9a" stroke-width="1.8"/><path d="M10.5,1 V4.7 H14.2" fill="none" stroke="#9a9a9a" stroke-width="1"/><rect x="0" y="6.3" width="17.5" height="8" fill="#f0a732"/><path d="M6.8,7.8 L4,10.3 L6.8,12.8 M10.7,7.8 L13.5,10.3 L10.7,12.8" fill="none" stroke="#6b4a1a" stroke-width="1.1"/></svg>
<div class="t" style="left:164.00px;top:424.46px;font-size:16px;color:#bbbbbb;letter-spacing:0.134px;">activity_main.xml</div>
<svg class="a" style="left:92px;top:450px;" width="10" height="11" viewBox="0 0 10 11"><path d="M0,0 V11 L10,5.5 z" fill="#a9a9a9"/></svg>
<svg class="a" style="left:116px;top:447px;" width="18" height="16" viewBox="0 0 18 16"><path d="M0,0 H7 L9,3 H18 V16 H0 Z" fill="#c49a5a"/><rect x="2.6" y="5.6" width="12.8" height="7.800000000000001" fill="#3c3f41"/><circle cx="9" cy="10" r="2.4" fill="#6ca6d6"/></svg>
<div class="t" style="left:139.00px;top:448.46px;font-size:16px;color:#bbbbbb;letter-spacing:0.548px;">mipmap</div>
<svg class="a" style="left:92px;top:474px;" width="10" height="11" viewBox="0 0 10 11"><path d="M0,0 V11 L10,5.5 z" fill="#a9a9a9"/></svg>
<svg class="a" style="left:116px;top:471px;" width="18" height="16" viewBox="0 0 18 16"><path d="M0,0 H7 L9,3 H18 V16 H0 Z" fill="#c49a5a"/><rect x="2.6" y="5.6" width="12.8" height="7.800000000000001" fill="#3c3f41"/><circle cx="9" cy="10" r="2.4" fill="#6ca6d6"/></svg>
<div class="t" style="left:139.00px;top:472.46px;font-size:16px;color:#bbbbbb;letter-spacing:-0.308px;">values</div>
<svg class="a" style="left:42px;top:498px;" width="10" height="11" viewBox="0 0 10 11"><path d="M0,0 V11 L10,5.5 z" fill="#a9a9a9"/></svg>
<svg class="a" style="left:66px;top:495px;" width="18" height="18" viewBox="0 0 18 18"><path d="M8.41,2.23 A6.8,6.8 0 0 1 15.8,9" fill="none" stroke="#1fa65a" stroke-width="2.8"/><path d="M15.16,11.87 A6.8,6.8 0 1 1 5.6,3.11" fill="none" stroke="#8bd35a" stroke-width="2.8"/><circle cx="9" cy="9" r="3" fill="#1fa65a"/></svg>
<div class="t" style="left:89.00px;top:496.46px;font-size:16px;color:#bbbbbb;letter-spacing:0.028px;">Gradle Scripts</div>
<div class="a" style="left:503px;top:127px;width:1397px;height:27px;background:#3c3f41;"></div>
<div class="a" style="left:894px;top:128px;width:183px;height:26px;background:#4e5254;"></div>
<div class="a" style="left:713px;top:128px;width:1px;height:26px;background:#2b2b2b;"></div>
<div class="a" style="left:893.5px;top:128px;width:1px;height:26px;background:#2b2b2b;"></div>
<div class="a" style="left:1076.5px;top:128px;width:1px;height:26px;background:#2b2b2b;"></div>
<div class="a" style="left:503px;top:153px;width:391px;height:1px;background:#2b2b2b;"></div>
<div class="a" style="left:1077px;top:153px;width:823px;height:1px;background:#2b2b2b;"></div>
<svg class="a" style="left:513px;top:131px;" width="18" height="20" viewBox="0 0 18 20"><path d="M1,1 H10.5 L14.2,4.7 V18.8 H1 Z" fill="#3c3f41" stroke="#9a9a9a" stroke-width="1.8"/><path d="M10.5,1 V4.7 H14.2" fill="none" stroke="#9a9a9a" stroke-width="1"/><rect x="0" y="6.3" width="17.5" height="8" fill="#f0a732"/><path d="M6.8,7.8 L4,10.3 L6.8,12.8 M10.7,7.8 L13.5,10.3 L10.7,12.8" fill="none" stroke="#6b4a1a" stroke-width="1.1"/><path d="M5.2,20.0 A6.5,6.4 0 0 1 18.2,20.0 Z" fill="#97c024"/><path d="M8.06,12.799999999999999 L9.620000000000001,14.6 M15.34,12.799999999999999 L13.780000000000001,14.6" stroke="#97c024" stroke-width="0.9"/><circle cx="9.36" cy="17.439999999999998" r="0.9100000000000001" fill="#3c3f41"/><circle cx="14.04" cy="17.439999999999998" r="0.9100000000000001" fill="#3c3f41"/></svg>
<div class="t" style="left:534.70px;top:134.46px;font-size:16px;color:#bbbbbb;letter-spacing:0.374px;">AndroidManifest.xml</div>
<svg class="a" style="left:696px;top:136px;" width="9" height="9" viewBox="0 0 9 9"><path d="M0.5,0.5 L8.5,8.5 M8.5,0.5 L0.5,8.5" stroke="#8a8a8a" stroke-width="1.6"/></svg>
<svg class="a" style="left:722px;top:131px;" width="19" height="19" viewBox="0 0 19 19"><circle cx="9.5" cy="9.5" r="8.8" fill="#a9d6f7" stroke="#78bdf0" stroke-width="1.2"/><path d="M12.3,6.7 A3.8,3.8 0 1 0 12.3,12.3" fill="none" stroke="#505050" stroke-width="1.5"/></svg>
<div class="t" style="left:745.00px;top:134.46px;font-size:16px;color:#bbbbbb;letter-spacing:0.333px;">MainActivity.java</div>
<svg class="a" style="left:745.0px;top:151px" width="125" height="3"><polyline points="0.0,0 2.0,2 4.0,0 6.0,2 8.0,0 10.0,2 12.0,0 14.0,2 16.0,0 18.0,2 20.0,0 22.0,2 24.0,0 26.0,2 28.0,0 30.0,2 32.0,0 34.0,2 36.0,0 38.0,2 40.0,0 42.0,2 44.0,0 46.0,2 48.0,0 50.0,2 52.0,0 54.0,2 56.0,0 58.0,2 60.0,0 62.0,2 64.0,0 66.0,2 68.0,0 70.0,2 72.0,0 74.0,2 76.0,0 78.0,2 80.0,0 82.0,2 84.0,0 86.0,2 88.0,0 90.0,2 92.0,0 94.0,2 96.0,0 98.0,2 100.0,0 102.0,2 104.0,0 106.0,2 108.0,0 110.0,2 112.0,0 114.0,2 116.0,0 118.0,2 120.0,0 122.0,2" fill="none" stroke="#bc3f3c" stroke-width="1"/></svg>
<svg class="a" style="left:876.5px;top:136px;" width="9" height="9" viewBox="0 0 9 9"><path d="M0.5,0.5 L8.5,8.5 M8.5,0.5 L0.5,8.5" stroke="#8a8a8a" stroke-width="1.6"/></svg>
<svg class="a" style="left:904px;top:131px;" width="18" height="20" viewBox="0 0 18 20"><path d="M1,1 H10.5 L14.2,4.7 V18.8 H1 Z" fill="#3c3f41" stroke="#9a9a9a" stroke-width="1.8"/><path d="M10.5,1 V4.7 H14.2" fill="none" stroke="#9a9a9a" stroke-width="1"/><rect x="0" y="6.3" width="17.5" height="8" fill="#f0a732"/><path d="M6.8,7.8 L4,10.3 L6.8,12.8 M10.7,7.8 L13.5,10.3 L10.7,12.8" fill="none" stroke="#6b4a1a" stroke-width="1.1"/></svg>
<div class="t" style="left:926.60px;top:134.46px;font-size:16px;color:#bbbbbb;letter-spacing:0.071px;">activity_main.xml</div>
<svg class="a" style="left:1058px;top:136px;" width="9" height="9" viewBox="0 0 9 9"><path d="M0.5,0.5 L8.5,8.5 M8.5,0.5 L0.5,8.5" stroke="#8a8a8a" stroke-width="1.6"/></svg>
<div class="a" style="left:503px;top:154px;width:1397px;height:4px;background:#4b4f51;"></div>
<div class="a" style="left:681px;top:158px;width:2px;height:795px;background:#2b2b2b;"></div>
<div class="t" style="left:509.40px;top:167.17px;font-size:13.5px;color:#bbbbbb;letter-spacing:0.569px;">Palette</div>
<svg class="a" style="left:603px;top:169px;" width="12" height="11" viewBox="0 0 12 11"><rect x="0.5" y="0.5" width="8" height="7" fill="none" stroke="#6a6a6a"/><rect x="3.5" y="3.5" width="8" height="7" fill="#3c3f41" stroke="#6a6a6a"/><path d="M5.5,6 H9.5 M5.5,8 H9.5" stroke="#6a6a6a"/></svg>
<div class="a" style="left:619px;top:166px;width:2px;height:18px;background:#5a5d5e;"></div>
<svg class="a" style="left:627px;top:166px;" width="16" height="16" viewBox="0 0 16 16"><rect x="6.6" y="0.3" width="2.8" height="4" transform="rotate(0 8 8)" fill="#9a9a9a"/><rect x="6.6" y="0.3" width="2.8" height="4" transform="rotate(45 8 8)" fill="#9a9a9a"/><rect x="6.6" y="0.3" width="2.8" height="4" transform="rotate(90 8 8)" fill="#9a9a9a"/><rect x="6.6" y="0.3" width="2.8" height="4" transform="rotate(135 8 8)" fill="#9a9a9a"/><rect x="6.6" y="0.3" width="2.8" height="4" transform="rotate(180 8 8)" fill="#9a9a9a"/><rect x="6.6" y="0.3" width="2.8" height="4" transform="rotate(225 8 8)" fill="#9a9a9a"/><rect x="6.6" y="0.3" width="2.8" height="4" transform="rotate(270 8 8)" fill="#9a9a9a"/><rect x="6.6" y="0.3" width="2.8" height="4" transform="rotate(315 8 8)" fill="#9a9a9a"/><circle cx="8" cy="8" r="5.6" fill="#9a9a9a"/><circle cx="8" cy="8" r="2.1" fill="#3c3f41"/></svg>
<svg class="a" style="left:645px;top:172px;" width="6" height="4" viewBox="0 0 6 4"><path d="M0,0 H6 L3,4 z" fill="#9a9a9a"/></svg>
<svg class="a" style="left:659px;top:166px;" width="17" height="16" viewBox="0 0 17 16"><rect x="0.8" y="0.8" width="3" height="13.6" fill="none" stroke="#9a9a9a" stroke-width="1.4"/><path d="M16.5,4.5 H7 M10,1.8 L7,4.5 L10,7.2" fill="none" stroke="#9a9a9a" stroke-width="1.4"/></svg>
<div class="a" style="left:503px;top:187px;width:178px;height:1px;background:#2b2b2b;"></div>
<svg class="a" style="left:514px;top:193px;" width="18" height="16" viewBox="0 0 18 16"><path d="M0,0 H7 L9,3 H18 V16 H0 Z" fill="#c49a5a"/><rect x="2.6" y="5.6" width="12.8" height="7.800000000000001" fill="#3c3f41"/></svg>
<div class="t" style="left:537.00px;top:194.30px;font-size:15px;color:#bbbbbb;letter-spacing:1.092px;">Widgets</div>
<svg class="a" style="left:538px;top:217px;" width="19" height="18" viewBox="0 0 19 18"><rect x="0.5" y="0.5" width="18" height="16" fill="#fff" stroke="#999"/><text x="2" y="13" font-size="12" font-family="Liberation Sans" fill="#333">Ab</text></svg>
<div class="t" style="left:562.50px;top:219.30px;font-size:15px;color:#bbbbbb;letter-spacing:0.550px;width:118.5px;overflow:hidden;height:21px;line-height:15px;">TextView</div>
<svg class="a" style="left:538px;top:242px;" width="19" height="18" viewBox="0 0 19 18"><rect x="0.5" y="0.5" width="18" height="16" rx="1" fill="#ececec" stroke="#999"/><text x="2" y="12.5" font-size="10" font-family="Liberation Sans" fill="#8db832">OK</text></svg>
<div class="t" style="left:562.50px;top:244.30px;font-size:15px;color:#bbbbbb;letter-spacing:0.550px;width:118.5px;overflow:hidden;height:21px;line-height:15px;">Button</div>
<svg class="a" style="left:538px;top:267px;" width="19" height="18" viewBox="0 0 19 18"><rect x="0.5" y="0.5" width="18" height="16" rx="1" fill="#ececec" stroke="#999"/><rect x="3" y="11" width="13" height="3" fill="#6aa6d6"/></svg>
<div class="t" style="left:562.50px;top:269.30px;font-size:15px;color:#bbbbbb;letter-spacing:0.550px;width:118.5px;overflow:hidden;height:21px;line-height:15px;">ToggleButton</div>
<svg class="a" style="left:538px;top:292px;" width="19" height="18" viewBox="0 0 19 18"><rect x="0.5" y="0.5" width="18" height="16" fill="#fff" stroke="#999"/><path d="M3,8 L7,12 L15,3.5" fill="none" stroke="#5db82d" stroke-width="2.4"/></svg>
<div class="t" style="left:562.50px;top:294.30px;font-size:15px;color:#bbbbbb;letter-spacing:0.550px;width:118.5px;overflow:hidden;height:21px;line-height:15px;">CheckBox</div>
<svg class="a" style="left:538px;top:317px;" width="19" height="18" viewBox="0 0 19 18"><circle cx="9.5" cy="8.5" r="7.5" fill="none" stroke="#6fc22a" stroke-width="1.8"/><circle cx="9.5" cy="8.5" r="4" fill="#6fc22a"/></svg>
<div class="t" style="left:562.50px;top:319.30px;font-size:15px;color:#bbbbbb;letter-spacing:0.550px;width:118.5px;overflow:hidden;height:21px;line-height:15px;">RadioButton</div>
<svg class="a" style="left:538px;top:342px;" width="19" height="18" viewBox="0 0 19 18"><rect x="0.5" y="0.5" width="18" height="16" fill="#fff" stroke="#999"/><text x="1.5" y="12" font-size="10" font-family="Liberation Mono" fill="#333">A</text><path d="M9,9 L11.5,12 L16,5" fill="none" stroke="#5db82d" stroke-width="1.6"/></svg>
<div class="t" style="left:562.50px;top:344.30px;font-size:15px;color:#bbbbbb;letter-spacing:0.550px;width:118.5px;overflow:hidden;height:21px;line-height:15px;">CheckedTextView</div>
<svg class="a" style="left:538px;top:367px;" width="19" height="18" viewBox="0 0 19 18"><rect x="0.5" y="6.5" width="18" height="10" fill="#fff" stroke="#999"/><path d="M3,10.5 H16 M3,13.5 H16" stroke="#6aa6d6" stroke-width="1.2"/><path d="M14,5 L18,1 V5 z" fill="#6aa6d6"/></svg>
<div class="t" style="left:562.50px;top:369.30px;font-size:15px;color:#bbbbbb;letter-spacing:0.550px;width:118.5px;overflow:hidden;height:21px;line-height:15px;">Spinner</div>
<svg class="a" style="left:538px;top:392px;" width="19" height="18" viewBox="0 0 19 18"><rect x="0.6" y="5" width="18.8" height="8" rx="2" fill="#f0f0f0" stroke="#aaa" stroke-width="1.2"/><rect x="2.5" y="7" width="9" height="4" fill="#6aa6d6"/><rect x="11.5" y="7" width="6" height="4" fill="#4a4a4a"/></svg>
<div class="t" style="left:562.50px;top:394.30px;font-size:15px;color:#bbbbbb;letter-spacing:0.550px;width:118.5px;overflow:hidden;height:21px;line-height:15px;">ProgressBar (Large)</div>
<svg class="a" style="left:538px;top:417px;" width="19" height="18" viewBox="0 0 19 18"><rect x="0.6" y="5" width="18.8" height="8" rx="2" fill="#f0f0f0" stroke="#aaa" stroke-width="1.2"/><rect x="2.5" y="7" width="9" height="4" fill="#6aa6d6"/><rect x="11.5" y="7" width="6" height="4" fill="#4a4a4a"/></svg>
<div class="t" style="left:562.50px;top:419.30px;font-size:15px;color:#bbbbbb;letter-spacing:0.550px;width:118.5px;overflow:hidden;height:21px;line-height:15px;">ProgressBar</div>
<svg class="a" style="left:538px;top:442px;" width="19" height="18" viewBox="0 0 19 18"><rect x="0.6" y="5" width="18.8" height="8" rx="2" fill="#f0f0f0" stroke="#aaa" stroke-width="1.2"/><rect x="2.5" y="7" width="9" height="4" fill="#6aa6d6"/><rect x="11.5" y="7" width="6" height="4" fill="#4a4a4a"/></svg>
<div class="t" style="left:562.50px;top:444.30px;font-size:15px;color:#bbbbbb;letter-spacing:0.550px;width:118.5px;overflow:hidden;height:21px;line-height:15px;">ProgressBar (Small)</div>
<svg class="a" style="left:538px;top:467px;" width="19" height="18" viewBox="0 0 19 18"><rect x="0.6" y="5" width="18.8" height="8" rx="2" fill="#f0f0f0" stroke="#aaa" stroke-width="1.2"/><rect x="2.5" y="7" width="9" height="4" fill="#6aa6d6"/><rect x="11.5" y="7" width="6" height="4" fill="#4a4a4a"/></svg>
<div class="t" style="left:562.50px;top:469.30px;font-size:15px;color:#bbbbbb;letter-spacing:0.550px;width:118.5px;overflow:hidden;height:21px;line-height:15px;">ProgressBar (Horizontal)</div>
<svg class="a" style="left:538px;top:492px;" width="19" height="18" viewBox="0 0 19 18"><rect x="0.6" y="5" width="18.8" height="8" rx="2" fill="#f0f0f0" stroke="#aaa" stroke-width="1.2"/><rect x="2.5" y="7" width="6" height="4" fill="#6aa6d6"/><rect x="12" y="7" width="5.5" height="4" fill="#4a4a4a"/><circle cx="9.5" cy="9" r="5" fill="#6aa6d6" stroke="#f0f0f0" stroke-width="1.4"/><circle cx="9.5" cy="9" r="1.5" fill="#fff"/></svg>
<div class="t" style="left:562.50px;top:494.30px;font-size:15px;color:#bbbbbb;letter-spacing:0.550px;width:118.5px;overflow:hidden;height:21px;line-height:15px;">SeekBar</div>
<svg class="a" style="left:538px;top:517px;" width="19" height="18" viewBox="0 0 19 18"><rect x="0.6" y="5" width="18.8" height="8" rx="2" fill="#f0f0f0" stroke="#aaa" stroke-width="1.2"/><rect x="2.5" y="7" width="6" height="4" fill="#6aa6d6"/><rect x="12" y="7" width="5.5" height="4" fill="#4a4a4a"/><circle cx="9.5" cy="9" r="5" fill="#6aa6d6" stroke="#f0f0f0" stroke-width="1.4"/><circle cx="9.5" cy="9" r="1.5" fill="#fff"/></svg>
<div class="t" style="left:562.50px;top:519.30px;font-size:15px;color:#bbbbbb;letter-spacing:0.550px;width:118.5px;overflow:hidden;height:21px;line-height:15px;">SeekBar (Discrete)</div>
<svg class="a" style="left:538px;top:542px;" width="19" height="18" viewBox="0 0 19 18"><rect x="0.5" y="2.5" width="18" height="14" fill="#fff" stroke="#999"/><circle cx="5" cy="7" r="2" fill="#5db82d"/><rect x="2" y="10" width="6" height="3" fill="#5db82d"/><path d="M10,6 H16 M10,9 H16 M10,12 H16" stroke="#555"/><rect x="5" y="14" width="9" height="3" fill="#3c3f41"/></svg>
<div class="t" style="left:562.50px;top:544.30px;font-size:15px;color:#bbbbbb;letter-spacing:0.550px;width:118.5px;overflow:hidden;height:21px;line-height:15px;">QuickContactBadge</div>
<svg class="a" style="left:538px;top:567px;" width="19" height="18" viewBox="0 0 19 18"><path d="M9.5,1 L11.8,6.4 L17.5,6.9 L13.2,10.7 L14.5,16.3 L9.5,13.3 L4.5,16.3 L5.8,10.7 L1.5,6.9 L7.2,6.4 z" fill="#6fc22a"/></svg>
<div class="t" style="left:562.50px;top:569.30px;font-size:15px;color:#bbbbbb;letter-spacing:0.550px;width:118.5px;overflow:hidden;height:21px;line-height:15px;">RatingBar</div>
<svg class="a" style="left:538px;top:592px;" width="19" height="18" viewBox="0 0 19 18"><rect x="0.5" y="3.5" width="18" height="11" fill="#333" stroke="#ddd"/><rect x="10" y="4" width="8" height="10" fill="#6aa6d6"/><rect x="13.5" y="6" width="1.2" height="6" fill="#fff"/></svg>
<div class="t" style="left:562.50px;top:594.30px;font-size:15px;color:#bbbbbb;letter-spacing:0.550px;width:118.5px;overflow:hidden;height:21px;line-height:15px;">Switch</div>
<svg class="a" style="left:538px;top:617px;" width="19" height="18" viewBox="0 0 19 18"><rect x="1.5" y="1.5" width="16" height="15" fill="none" stroke="#8db832" stroke-width="2" stroke-dasharray="2,1.5"/></svg>
<div class="t" style="left:562.50px;top:619.30px;font-size:15px;color:#bbbbbb;letter-spacing:0.550px;width:118.5px;overflow:hidden;height:21px;line-height:15px;">Space</div>
<div class="a" style="left:668px;top:188px;width:13px;height:86px;background:#505354;"></div>
<div class="a" style="left:503px;top:641px;width:178px;height:1px;background:#2b2b2b;"></div>
<svg class="a" style="left:583px;top:643px;" width="19" height="4" viewBox="0 0 19 4"><path d="M1,3.5 L3,0.5" stroke="#888" stroke-width="1"/><path d="M5,3.5 L7,0.5" stroke="#888" stroke-width="1"/><path d="M9,3.5 L11,0.5" stroke="#888" stroke-width="1"/><path d="M13,3.5 L15,0.5" stroke="#888" stroke-width="1"/><path d="M17,3.5 L19,0.5" stroke="#888" stroke-width="1"/></svg>
<div class="t" style="left:508.30px;top:653.30px;font-size:13px;color:#bbbbbb;letter-spacing:1.158px;">Component Tree</div>
<div class="a" style="left:503px;top:672px;width:178px;height:1px;background:#2b2b2b;"></div>
<svg class="a" style="left:538px;top:677px;" width="20" height="19" viewBox="0 0 20 19"><rect x="0.5" y="0.5" width="19" height="18" fill="#f2f2f2" stroke="#aaa"/><path d="M1,6.5 H19 M1,12.5 H19" stroke="#9a9a9a" stroke-width="1"/></svg>
<div class="t" style="left:561.5px;top:679.3px;font-size:15px;letter-spacing:0.55px;width:119.5px;overflow:hidden;height:20px;line-height:15px">LinearLayout <span style="color:#787878">(vertical)</span></div>
<div class="a" style="left:683px;top:189px;width:899px;height:1px;background:#2b2b2b;"></div>
<svg class="a" style="left:688px;top:164px;" width="21" height="21" viewBox="0 0 21 21"><g fill="none" stroke="#bbbbbb" stroke-width="1.6"><rect x="0.8" y="0.8" width="19.4" height="19.4"/><path d="M1,7 H20 M7,7 V20 M7,13.5 H20"/></g></svg>
<svg class="a" style="left:719px;top:164px;" width="21" height="21" viewBox="0 0 21 21"><rect x="0" y="0" width="21" height="21" fill="#389fd6"/><g stroke="#1d5f8a" stroke-width="1.6"><path d="M7,0 V21 M14,0 V21 M0,7 H21 M0,14 H21"/></g><rect x="0.8" y="0.8" width="19.4" height="19.4" fill="none" stroke="#bbbbbb" stroke-width="1.6"/></svg>
<svg class="a" style="left:750px;top:164px;" width="21" height="21" viewBox="0 0 21 21"><g fill="none" stroke="#bbbbbb" stroke-width="1.6"><rect x="0.8" y="0.8" width="8" height="19.4"/><path d="M1,7 H9 M1,13.5 H9"/></g><rect x="12" y="0" width="9" height="21" fill="#389fd6"/><path d="M12,7 H21 M12,13.5 H21" stroke="#1d5f8a" stroke-width="1.6"/></svg>
<svg class="a" style="left:779.5px;top:163px;" width="1" height="24" viewBox="0 0 1 24"><rect x="0" y="0" width="1" height="1" fill="#6e7071"/><rect x="0" y="3" width="1" height="1" fill="#6e7071"/><rect x="0" y="6" width="1" height="1" fill="#6e7071"/><rect x="0" y="9" width="1" height="1" fill="#6e7071"/><rect x="0" y="12" width="1" height="1" fill="#6e7071"/><rect x="0" y="15" width="1" height="1" fill="#6e7071"/><rect x="0" y="18" width="1" height="1" fill="#6e7071"/><rect x="0" y="21" width="1" height="1" fill="#6e7071"/><rect x="0" y="24" width="1" height="1" fill="#6e7071"/></svg>
<svg class="a" style="left:785px;top:164px;" width="22" height="21" viewBox="0 0 22 21"><rect x="6" y="3" width="9" height="14" rx="1.5" transform="rotate(-40 10.5 10)" fill="none" stroke="#bbbbbb" stroke-width="1.6"/><path d="M3,15 A9,9 0 0 1 8,2" fill="none" stroke="#389fd6" stroke-width="1.6"/><path d="M19,6 A9,9 0 0 1 13,19" fill="none" stroke="#389fd6" stroke-width="1.6"/></svg>
<svg class="a" style="left:810px;top:172px;" width="6" height="4" viewBox="0 0 6 4"><path d="M0,0 H6 L3,4 z" fill="#777"/></svg>
<svg class="a" style="left:826px;top:163px;" width="1" height="24" viewBox="0 0 1 24"><rect x="0" y="0" width="1" height="1" fill="#6e7071"/><rect x="0" y="3" width="1" height="1" fill="#6e7071"/><rect x="0" y="6" width="1" height="1" fill="#6e7071"/><rect x="0" y="9" width="1" height="1" fill="#6e7071"/><rect x="0" y="12" width="1" height="1" fill="#6e7071"/><rect x="0" y="15" width="1" height="1" fill="#6e7071"/><rect x="0" y="18" width="1" height="1" fill="#6e7071"/><rect x="0" y="21" width="1" height="1" fill="#6e7071"/><rect x="0" y="24" width="1" height="1" fill="#6e7071"/></svg>
<svg class="a" style="left:836px;top:164px;" width="14" height="20" viewBox="0 0 14 20"><rect x="1" y="1" width="12" height="18" rx="2" fill="none" stroke="#6aa6d6" stroke-width="1.8"/><rect x="5" y="15.5" width="4" height="1.4" fill="#6aa6d6"/></svg>
<div class="t" style="left:854.30px;top:168.23px;font-size:14.5px;color:#bbbbbb;letter-spacing:-0.003px;">Nexus 4</div>
<svg class="a" style="left:911px;top:172px;" width="7" height="4" viewBox="0 0 7 4"><path d="M0,0 H7 L3.5,4 z" fill="#777"/></svg>
<svg class="a" style="left:929px;top:167px;" width="20" height="13" viewBox="0 0 20 13"><path d="M0,13 A10,11 0 0 1 20,13 z" fill="#97c024"/><circle cx="6" cy="8" r="1.2" fill="#3c3f41"/><circle cx="14" cy="8" r="1.2" fill="#3c3f41"/><path d="M3,0 L5.5,4 M17,0 L14.5,4" stroke="#97c024" stroke-width="1.2"/></svg>
<div class="t" style="left:950.00px;top:168.23px;font-size:14.5px;color:#bbbbbb;letter-spacing:-0.695px;">24</div>
<svg class="a" style="left:968px;top:172px;" width="7" height="4" viewBox="0 0 7 4"><path d="M0,0 H7 L3.5,4 z" fill="#777"/></svg>
<svg class="a" style="left:988px;top:164px;" width="19" height="20" viewBox="0 0 19 20"><circle cx="9.5" cy="10" r="8.5" fill="none" stroke="#bbbbbb" stroke-width="1.8"/><path d="M9.5,1.5 A8.5,8.5 0 0 1 9.5,18.5 z" fill="#bbbbbb"/></svg>
<div class="t" style="left:1008.80px;top:168.23px;font-size:14.5px;color:#bbbbbb;letter-spacing:0.399px;">AppTheme</div>
<svg class="a" style="left:1091px;top:164px;" width="21" height="21" viewBox="0 0 21 21"><g fill="none" stroke="#389fd6" stroke-width="1.8"><circle cx="10.5" cy="10.5" r="9.5"/><ellipse cx="10.5" cy="10.5" rx="4.5" ry="9.5"/><path d="M1,10.5 H20 M3,5 H18 M3,16 H18"/></g></svg>
<div class="t" style="left:1113.40px;top:168.23px;font-size:14.5px;color:#bbbbbb;letter-spacing:0.154px;">Language</div>
<svg class="a" style="left:1183px;top:172px;" width="7" height="4" viewBox="0 0 7 4"><path d="M0,0 H7 L3.5,4 z" fill="#777"/></svg>
<svg class="a" style="left:1203px;top:163px;" width="1" height="24" viewBox="0 0 1 24"><rect x="0" y="0" width="1" height="1" fill="#6e7071"/><rect x="0" y="3" width="1" height="1" fill="#6e7071"/><rect x="0" y="6" width="1" height="1" fill="#6e7071"/><rect x="0" y="9" width="1" height="1" fill="#6e7071"/><rect x="0" y="12" width="1" height="1" fill="#6e7071"/><rect x="0" y="15" width="1" height="1" fill="#6e7071"/><rect x="0" y="18" width="1" height="1" fill="#6e7071"/><rect x="0" y="21" width="1" height="1" fill="#6e7071"/><rect x="0" y="24" width="1" height="1" fill="#6e7071"/></svg>
<svg class="a" style="left:1213px;top:164px;" width="14" height="20" viewBox="0 0 14 20"><rect x="1" y="1" width="12" height="18" rx="2" fill="none" stroke="#aaaaaa" stroke-width="1.8"/><rect x="5" y="15.5" width="4" height="1.4" fill="#aaa"/></svg>
<svg class="a" style="left:1234px;top:172px;" width="7" height="4" viewBox="0 0 7 4"><path d="M0,0 H7 L3.5,4 z" fill="#777"/></svg>
<svg class="a" style="left:691px;top:201px;" width="18" height="15" viewBox="0 0 18 15"><g fill="#e8e8e8"><rect y="0" width="18" height="3.5"/><rect y="5.5" width="18" height="3.5"/><rect y="11" width="18" height="3.5"/></g></svg>
<svg class="a" style="left:722px;top:199px;" width="17" height="16" viewBox="0 0 17 16"><rect width="17" height="16" fill="#e0e0e0"/><path d="M1,9 H16" stroke="#888" stroke-dasharray="2,1.5"/><path d="M5,3 L8.5,9 M12,3 L6,14" stroke="#389fd6" stroke-width="1.4"/></svg>
<svg class="a" style="left:750.5px;top:196px;" width="1" height="24" viewBox="0 0 1 24"><rect x="0" y="0" width="1" height="1" fill="#6e7071"/><rect x="0" y="3" width="1" height="1" fill="#6e7071"/><rect x="0" y="6" width="1" height="1" fill="#6e7071"/><rect x="0" y="9" width="1" height="1" fill="#6e7071"/><rect x="0" y="12" width="1" height="1" fill="#6e7071"/><rect x="0" y="15" width="1" height="1" fill="#6e7071"/><rect x="0" y="18" width="1" height="1" fill="#6e7071"/><rect x="0" y="21" width="1" height="1" fill="#6e7071"/><rect x="0" y="24" width="1" height="1" fill="#6e7071"/></svg>
<svg class="a" style="left:760px;top:198px;" width="19" height="18" viewBox="0 0 19 18"><rect width="19" height="18" fill="#6a6a6a" stroke="#777"/><path d="M3,9 H16 M3,9 L6,6.5 M3,9 L6,11.5 M16,9 L13,6.5 M16,9 L13,11.5" stroke="#3c3f41" stroke-width="1.4" fill="none"/></svg>
<svg class="a" style="left:791px;top:198px;" width="19" height="18" viewBox="0 0 19 18"><rect width="19" height="18" fill="#6a6a6a" stroke="#777"/><path d="M9.5,2.5 V15.5 M9.5,2.5 L7,5.5 M9.5,2.5 L12,5.5 M9.5,15.5 L7,12.5 M9.5,15.5 L12,12.5" stroke="#3c3f41" stroke-width="1.4" fill="none"/></svg>
<svg class="a" style="left:1371px;top:198px;" width="20" height="20" viewBox="0 0 20 20"><circle cx="10" cy="10" r="9" fill="none" stroke="#bbbbbb" stroke-width="1.8"/><path d="M5,10 H15" stroke="#bbbbbb" stroke-width="2"/></svg>
<div class="t" style="left:1396.50px;top:201.30px;font-size:15px;color:#bbbbbb;letter-spacing:0.500px;">46%</div>
<svg class="a" style="left:1437px;top:198px;" width="20" height="20" viewBox="0 0 20 20"><circle cx="10" cy="10" r="9" fill="none" stroke="#bbbbbb" stroke-width="1.8"/><path d="M5,10 H15 M10,5 V15" stroke="#bbbbbb" stroke-width="2"/></svg>
<svg class="a" style="left:1468px;top:199px;" width="20" height="16" viewBox="0 0 20 16"><rect x="1" y="1" width="18" height="14" fill="none" stroke="#bbbbbb" stroke-width="1.8"/><path d="M4,8 V4 H8 M16,8 V12 H12" fill="none" stroke="#bbbbbb" stroke-width="1.6"/></svg>
<svg class="a" style="left:1500px;top:198px;" width="19" height="20" viewBox="0 0 19 20"><path d="M4,20 C2,16 0,12 1,10 C2,9 3.5,10 5,12 V3 a1.2,1.2 0 0 1 2.4,0 V9 V1.5 a1.2,1.2 0 0 1 2.4,0 V9 V2.5 a1.2,1.2 0 0 1 2.4,0 V9.5 V4.5 a1.2,1.2 0 0 1 2.4,0 V14 C14.6,17 13,19 12.5,20 z" fill="#bbbbbb"/></svg>
<svg class="a" style="left:1528px;top:196px;" width="1" height="24" viewBox="0 0 1 24"><rect x="0" y="0" width="1" height="1" fill="#6e7071"/><rect x="0" y="3" width="1" height="1" fill="#6e7071"/><rect x="0" y="6" width="1" height="1" fill="#6e7071"/><rect x="0" y="9" width="1" height="1" fill="#6e7071"/><rect x="0" y="12" width="1" height="1" fill="#6e7071"/><rect x="0" y="15" width="1" height="1" fill="#6e7071"/><rect x="0" y="18" width="1" height="1" fill="#6e7071"/><rect x="0" y="21" width="1" height="1" fill="#6e7071"/><rect x="0" y="24" width="1" height="1" fill="#6e7071"/></svg>
<svg class="a" style="left:1541px;top:199px;" width="15" height="19" viewBox="0 0 15 19"><path d="M7.5,1 C3,1 2.5,5 2.5,8 V12 L0.5,15 H14.5 L12.5,12 V8 C12.5,5 12,1 7.5,1 z" fill="none" stroke="#bbbbbb" stroke-width="1.6"/><path d="M5.5,16.5 a2,2 0 0 0 4,0" fill="#bbbbbb"/></svg>
<div class="a" style="left:682px;top:158px;width:1px;height:795px;background:#2b2b2b;"></div>
<div class="a" style="left:683px;top:226px;width:898px;height:1px;background:#323436;"></div>
<div class="a" style="left:683px;top:227px;width:898px;height:20px;background:#45484a;"></div>
<div class="a" style="left:683px;top:247px;width:20px;height:690px;background:#45484a;"></div>
<svg class="a" style="left:683px;top:227px;" width="884" height="20" viewBox="0 0 884 20"><path d="M10.5,0.5 V7" stroke="#9a9a9a" stroke-width="1"/><path d="M20.5,0.5 V7" stroke="#9a9a9a" stroke-width="1"/><path d="M30.5,0.5 V7" stroke="#9a9a9a" stroke-width="1"/><path d="M40.5,0.5 V7" stroke="#9a9a9a" stroke-width="1"/><path d="M50.5,0.5 V7" stroke="#9a9a9a" stroke-width="1"/><path d="M60.5,0.5 V7" stroke="#9a9a9a" stroke-width="1"/><path d="M70.5,0 V20" stroke="#9a9a9a" stroke-width="1"/><path d="M80.5,0.5 V7" stroke="#9a9a9a" stroke-width="1"/><path d="M90.5,0.5 V7" stroke="#9a9a9a" stroke-width="1"/><path d="M100.5,0.5 V7" stroke="#9a9a9a" stroke-width="1"/><path d="M110.5,0.5 V7" stroke="#9a9a9a" stroke-width="1"/><path d="M120.5,0.5 V7" stroke="#9a9a9a" stroke-width="1"/><path d="M130.5,0.5 V7" stroke="#9a9a9a" stroke-width="1"/><path d="M140.5,0.5 V7" stroke="#9a9a9a" stroke-width="1"/><path d="M150.5,0.5 V7" stroke="#9a9a9a" stroke-width="1"/><path d="M160.5,0.5 V7" stroke="#9a9a9a" stroke-width="1"/><path d="M170.5,0 V20" stroke="#9a9a9a" stroke-width="1"/><path d="M180.5,0.5 V7" stroke="#9a9a9a" stroke-width="1"/><path d="M190.5,0.5 V7" stroke="#9a9a9a" stroke-width="1"/><path d="M200.5,0.5 V7" stroke="#9a9a9a" stroke-width="1"/><path d="M210.5,0.5 V7" stroke="#9a9a9a" stroke-width="1"/><path d="M220.5,0.5 V7" stroke="#9a9a9a" stroke-width="1"/><path d="M230.5,0.5 V7" stroke="#9a9a9a" stroke-width="1"/><path d="M240.5,0.5 V7" stroke="#9a9a9a" stroke-width="1"/><path d="M250.5,0.5 V7" stroke="#9a9a9a" stroke-width="1"/><path d="M260.5,0.5 V7" stroke="#9a9a9a" stroke-width="1"/><path d="M270.5,0 V20" stroke="#9a9a9a" stroke-width="1"/><path d="M280.5,0.5 V7" stroke="#9a9a9a" stroke-width="1"/><path d="M290.5,0.5 V7" stroke="#9a9a9a" stroke-width="1"/><path d="M300.5,0.5 V7" stroke="#9a9a9a" stroke-width="1"/><path d="M310.5,0.5 V7" stroke="#9a9a9a" stroke-width="1"/><path d="M320.5,0.5 V7" stroke="#9a9a9a" stroke-width="1"/><path d="M330.5,0.5 V7" stroke="#9a9a9a" stroke-width="1"/><path d="M340.5,0.5 V7" stroke="#9a9a9a" stroke-width="1"/><path d="M350.5,0.5 V7" stroke="#9a9a9a" stroke-width="1"/><path d="M360.5,0.5 V7" stroke="#9a9a9a" stroke-width="1"/><path d="M370.5,0 V20" stroke="#9a9a9a" stroke-width="1"/><path d="M380.5,0.5 V7" stroke="#9a9a9a" stroke-width="1"/><path d="M390.5,0.5 V7" stroke="#9a9a9a" stroke-width="1"/><path d="M400.5,0.5 V7" stroke="#9a9a9a" stroke-width="1"/><path d="M410.5,0.5 V7" stroke="#9a9a9a" stroke-width="1"/><path d="M420.5,0.5 V7" stroke="#9a9a9a" stroke-width="1"/><path d="M430.5,0.5 V7" stroke="#9a9a9a" stroke-width="1"/><path d="M440.5,0.5 V7" stroke="#9a9a9a" stroke-width="1"/><path d="M450.5,0.5 V7" stroke="#9a9a9a" stroke-width="1"/><path d="M460.5,0.5 V7" stroke="#9a9a9a" stroke-width="1"/><path d="M470.5,0 V20" stroke="#9a9a9a" stroke-width="1"/><path d="M480.5,0.5 V7" stroke="#9a9a9a" stroke-width="1"/><path d="M490.5,0.5 V7" stroke="#9a9a9a" stroke-width="1"/><path d="M500.5,0.5 V7" stroke="#9a9a9a" stroke-width="1"/><path d="M510.5,0.5 V7" stroke="#9a9a9a" stroke-width="1"/><path d="M520.5,0.5 V7" stroke="#9a9a9a" stroke-width="1"/><path d="M530.5,0.5 V7" stroke="#9a9a9a" stroke-width="1"/><path d="M540.5,0.5 V7" stroke="#9a9a9a" stroke-width="1"/><path d="M550.5,0.5 V7" stroke="#9a9a9a" stroke-width="1"/><path d="M560.5,0.5 V7" stroke="#9a9a9a" stroke-width="1"/><path d="M570.5,0 V20" stroke="#9a9a9a" stroke-width="1"/><path d="M580.5,0.5 V7" stroke="#9a9a9a" stroke-width="1"/><path d="M590.5,0.5 V7" stroke="#9a9a9a" stroke-width="1"/><path d="M600.5,0.5 V7" stroke="#9a9a9a" stroke-width="1"/><path d="M610.5,0.5 V7" stroke="#9a9a9a" stroke-width="1"/><path d="M620.5,0.5 V7" stroke="#9a9a9a" stroke-width="1"/><path d="M630.5,0.5 V7" stroke="#9a9a9a" stroke-width="1"/><path d="M640.5,0.5 V7" stroke="#9a9a9a" stroke-width="1"/><path d="M650.5,0.5 V7" stroke="#9a9a9a" stroke-width="1"/><path d="M660.5,0.5 V7" stroke="#9a9a9a" stroke-width="1"/><path d="M670.5,0 V20" stroke="#9a9a9a" stroke-width="1"/><path d="M680.5,0.5 V7" stroke="#9a9a9a" stroke-width="1"/><path d="M690.5,0.5 V7" stroke="#9a9a9a" stroke-width="1"/><path d="M700.5,0.5 V7" stroke="#9a9a9a" stroke-width="1"/><path d="M710.5,0.5 V7" stroke="#9a9a9a" stroke-width="1"/><path d="M720.5,0.5 V7" stroke="#9a9a9a" stroke-width="1"/><path d="M730.5,0.5 V7" stroke="#9a9a9a" stroke-width="1"/><path d="M740.5,0.5 V7" stroke="#9a9a9a" stroke-width="1"/><path d="M750.5,0.5 V7" stroke="#9a9a9a" stroke-width="1"/><path d="M760.5,0.5 V7" stroke="#9a9a9a" stroke-width="1"/><path d="M770.5,0 V20" stroke="#9a9a9a" stroke-width="1"/><path d="M780.5,0.5 V7" stroke="#9a9a9a" stroke-width="1"/><path d="M790.5,0.5 V7" stroke="#9a9a9a" stroke-width="1"/><path d="M800.5,0.5 V7" stroke="#9a9a9a" stroke-width="1"/><path d="M810.5,0.5 V7" stroke="#9a9a9a" stroke-width="1"/><path d="M820.5,0.5 V7" stroke="#9a9a9a" stroke-width="1"/><path d="M830.5,0.5 V7" stroke="#9a9a9a" stroke-width="1"/><path d="M840.5,0.5 V7" stroke="#9a9a9a" stroke-width="1"/><path d="M850.5,0.5 V7" stroke="#9a9a9a" stroke-width="1"/><path d="M860.5,0.5 V7" stroke="#9a9a9a" stroke-width="1"/><path d="M870.5,0 V20" stroke="#9a9a9a" stroke-width="1"/><path d="M880.5,0.5 V7" stroke="#9a9a9a" stroke-width="1"/><path d="M0.5,7 V0.5 H7" fill="none" stroke="#9a9a9a"/></svg>
<div class="t" style="left:755.00px;top:236.39px;font-size:11px;color:#bbbbbb;letter-spacing:0.000px;">0</div>
<div class="t" style="left:855.00px;top:236.39px;font-size:11px;color:#bbbbbb;letter-spacing:-0.800px;">100</div>
<div class="t" style="left:955.00px;top:236.39px;font-size:11px;color:#bbbbbb;letter-spacing:-0.800px;">200</div>
<div class="t" style="left:1055.00px;top:236.39px;font-size:11px;color:#bbbbbb;letter-spacing:-0.800px;">300</div>
<div class="t" style="left:1155.00px;top:236.39px;font-size:11px;color:#bbbbbb;letter-spacing:-0.800px;">400</div>
<div class="t" style="left:1255.00px;top:236.39px;font-size:11px;color:#bbbbbb;letter-spacing:-0.800px;">500</div>
<div class="t" style="left:1355.00px;top:236.39px;font-size:11px;color:#bbbbbb;letter-spacing:-0.800px;">600</div>
<div class="t" style="left:1455.00px;top:236.39px;font-size:11px;color:#bbbbbb;letter-spacing:-0.800px;">700</div>
<div class="t" style="left:1555.00px;top:236.39px;font-size:11px;color:#bbbbbb;letter-spacing:-0.800px;">80</div>
<svg class="a" style="left:683px;top:247px;" width="20" height="690" viewBox="0 0 20 690"><path d="M0.5,-9.5 H7" stroke="#9a9a9a"/><path d="M0.5,0.5 H7" stroke="#9a9a9a"/><path d="M0.5,10.5 H7" stroke="#9a9a9a"/><path d="M0.5,20.5 H7" stroke="#9a9a9a"/><path d="M0.5,30.5 H7" stroke="#9a9a9a"/><path d="M0.5,40.5 H7" stroke="#9a9a9a"/><path d="M0,50.5 H20" stroke="#9a9a9a"/><path d="M0.5,60.5 H7" stroke="#9a9a9a"/><path d="M0.5,70.5 H7" stroke="#9a9a9a"/><path d="M0.5,80.5 H7" stroke="#9a9a9a"/><path d="M0.5,90.5 H7" stroke="#9a9a9a"/><path d="M0.5,100.5 H7" stroke="#9a9a9a"/><path d="M0.5,110.5 H7" stroke="#9a9a9a"/><path d="M0.5,120.5 H7" stroke="#9a9a9a"/><path d="M0.5,130.5 H7" stroke="#9a9a9a"/><path d="M0.5,140.5 H7" stroke="#9a9a9a"/><path d="M0,150.5 H20" stroke="#9a9a9a"/><path d="M0.5,160.5 H7" stroke="#9a9a9a"/><path d="M0.5,170.5 H7" stroke="#9a9a9a"/><path d="M0.5,180.5 H7" stroke="#9a9a9a"/><path d="M0.5,190.5 H7" stroke="#9a9a9a"/><path d="M0.5,200.5 H7" stroke="#9a9a9a"/><path d="M0.5,210.5 H7" stroke="#9a9a9a"/><path d="M0.5,220.5 H7" stroke="#9a9a9a"/><path d="M0.5,230.5 H7" stroke="#9a9a9a"/><path d="M0.5,240.5 H7" stroke="#9a9a9a"/><path d="M0,250.5 H20" stroke="#9a9a9a"/><path d="M0.5,260.5 H7" stroke="#9a9a9a"/><path d="M0.5,270.5 H7" stroke="#9a9a9a"/><path d="M0.5,280.5 H7" stroke="#9a9a9a"/><path d="M0.5,290.5 H7" stroke="#9a9a9a"/><path d="M0.5,300.5 H7" stroke="#9a9a9a"/><path d="M0.5,310.5 H7" stroke="#9a9a9a"/><path d="M0.5,320.5 H7" stroke="#9a9a9a"/><path d="M0.5,330.5 H7" stroke="#9a9a9a"/><path d="M0.5,340.5 H7" stroke="#9a9a9a"/><path d="M0,350.5 H20" stroke="#9a9a9a"/><path d="M0.5,360.5 H7" stroke="#9a9a9a"/><path d="M0.5,370.5 H7" stroke="#9a9a9a"/><path d="M0.5,380.5 H7" stroke="#9a9a9a"/><path d="M0.5,390.5 H7" stroke="#9a9a9a"/><path d="M0.5,400.5 H7" stroke="#9a9a9a"/><path d="M0.5,410.5 H7" stroke="#9a9a9a"/><path d="M0.5,420.5 H7" stroke="#9a9a9a"/><path d="M0.5,430.5 H7" stroke="#9a9a9a"/><path d="M0.5,440.5 H7" stroke="#9a9a9a"/><path d="M0,450.5 H20" stroke="#9a9a9a"/><path d="M0.5,460.5 H7" stroke="#9a9a9a"/><path d="M0.5,470.5 H7" stroke="#9a9a9a"/><path d="M0.5,480.5 H7" stroke="#9a9a9a"/><path d="M0.5,490.5 H7" stroke="#9a9a9a"/><path d="M0.5,500.5 H7" stroke="#9a9a9a"/><path d="M0.5,510.5 H7" stroke="#9a9a9a"/><path d="M0.5,520.5 H7" stroke="#9a9a9a"/><path d="M0.5,530.5 H7" stroke="#9a9a9a"/><path d="M0.5,540.5 H7" stroke="#9a9a9a"/><path d="M0,550.5 H20" stroke="#9a9a9a"/><path d="M0.5,560.5 H7" stroke="#9a9a9a"/><path d="M0.5,570.5 H7" stroke="#9a9a9a"/><path d="M0.5,580.5 H7" stroke="#9a9a9a"/><path d="M0.5,590.5 H7" stroke="#9a9a9a"/><path d="M0.5,600.5 H7" stroke="#9a9a9a"/><path d="M0.5,610.5 H7" stroke="#9a9a9a"/><path d="M0.5,620.5 H7" stroke="#9a9a9a"/><path d="M0.5,630.5 H7" stroke="#9a9a9a"/><path d="M0.5,640.5 H7" stroke="#9a9a9a"/><path d="M0,650.5 H20" stroke="#9a9a9a"/><path d="M0.5,660.5 H7" stroke="#9a9a9a"/><path d="M0.5,670.5 H7" stroke="#9a9a9a"/><path d="M0.5,680.5 H7" stroke="#9a9a9a"/></svg>
<div class="t" style="left:693px;top:295px;font-size:11px;line-height:11px;letter-spacing:-0.8px;color:#bbbbbb;transform:rotate(-90deg);transform-origin:0 0">0</div>
<div class="t" style="left:693px;top:395px;font-size:11px;line-height:11px;letter-spacing:-0.8px;color:#bbbbbb;transform:rotate(-90deg);transform-origin:0 0">100</div>
<div class="t" style="left:693px;top:495px;font-size:11px;line-height:11px;letter-spacing:-0.8px;color:#bbbbbb;transform:rotate(-90deg);transform-origin:0 0">200</div>
<div class="t" style="left:693px;top:595px;font-size:11px;line-height:11px;letter-spacing:-0.8px;color:#bbbbbb;transform:rotate(-90deg);transform-origin:0 0">300</div>
<div class="t" style="left:693px;top:695px;font-size:11px;line-height:11px;letter-spacing:-0.8px;color:#bbbbbb;transform:rotate(-90deg);transform-origin:0 0">400</div>
<div class="t" style="left:693px;top:795px;font-size:11px;line-height:11px;letter-spacing:-0.8px;color:#bbbbbb;transform:rotate(-90deg);transform-origin:0 0">500</div>
<div class="t" style="left:693px;top:895px;font-size:11px;line-height:11px;letter-spacing:-0.8px;color:#bbbbbb;transform:rotate(-90deg);transform-origin:0 0">600</div>
<div class="a" style="left:753px;top:297px;width:354px;height:23px;background:#303f9f;"></div>
<div class="a" style="left:753px;top:320px;width:354px;height:51px;background:#3f51b5;"></div>
<div class="a" style="left:753px;top:371px;width:354px;height:472px;background:#fafafa;"></div>
<div class="a" style="left:753px;top:843px;width:354px;height:44px;background:#000000;"></div>
<svg class="a" style="left:1037px;top:301px;" width="18" height="15" viewBox="0 0 18 15"><path d="M0,3 A13,13 0 0 1 18,3 L9,15 z" fill="#fff"/></svg>
<svg class="a" style="left:1058px;top:301px;" width="11" height="16" viewBox="0 0 11 16"><rect x="3" y="0" width="5" height="2" fill="#fff"/><rect x="0" y="1.5" width="11" height="14.5" fill="#fff"/></svg>
<div class="t" style="left:1074.30px;top:302.65px;font-size:14px;color:#ffffff;letter-spacing:0.133px;"><span style="-webkit-text-stroke:0.35px #fff">6:00</span></div>
<div class="t" style="left:768.80px;top:337.36px;font-size:18px;color:#ffffff;letter-spacing:0.197px;"><span style="-webkit-text-stroke:0.45px #fff">SecondProgram</span></div>
<svg class="a" style="left:801px;top:856px;" width="16" height="18" viewBox="0 0 16 18"><path d="M1.2,9 L15,1.5 V16.5 z" fill="none" stroke="#fff" stroke-width="2"/></svg>
<svg class="a" style="left:921px;top:856px;" width="18" height="18" viewBox="0 0 18 18"><circle cx="9" cy="9" r="7.8" fill="none" stroke="#fff" stroke-width="2"/></svg>
<svg class="a" style="left:1044px;top:857px;" width="15" height="15" viewBox="0 0 15 15"><rect x="1" y="1" width="13" height="13" fill="none" stroke="#fff" stroke-width="2"/></svg>
<svg class="a" style="left:733px;top:296px;" width="395" height="1" viewBox="0 0 395 1"><path d="M0,0.5 H395" stroke="#d8d8d8" stroke-dasharray="5,3"/></svg>
<svg class="a" style="left:733px;top:887px;" width="395" height="1" viewBox="0 0 395 1"><path d="M0,0.5 H395" stroke="#d8d8d8" stroke-dasharray="5,3"/></svg>
<svg class="a" style="left:752px;top:277px;" width="1" height="629" viewBox="0 0 1 629"><path d="M0.5,0 V629" stroke="#d8d8d8" stroke-dasharray="5,3"/></svg>
<svg class="a" style="left:1107px;top:277px;" width="1" height="629" viewBox="0 0 1 629"><path d="M0.5,0 V629" stroke="#d8d8d8" stroke-dasharray="5,3"/></svg>
<svg class="a" style="left:1111px;top:889px;" width="17" height="19" viewBox="0 0 17 19"><path d="M1,18 L16,3 M9,18 L16,11" stroke="#aaaaaa" stroke-width="1"/></svg>
<div class="a" style="left:1117px;top:297px;width:354px;height:590px;background:#133573;"></div>
<div class="a" style="left:1117px;top:371px;width:354px;height:473px;border:1px solid #3d6fb0"></div>
<div class="t" style="left:1261.00px;top:602.84px;font-size:12px;color:#6aa0da;letter-spacing:-0.215px;">LinearLayout</div>
<div class="a" style="left:1581px;top:158px;width:1px;height:795px;background:#2b2b2b;"></div>
<div class="a" style="left:1901px;top:127px;width:1px;height:860px;background:#2b2b2b;"></div>
<svg class="a" style="left:1906px;top:138px;" width="18" height="18" viewBox="0 0 18 18"><path d="M8.41,2.23 A6.8,6.8 0 0 1 15.8,9" fill="none" stroke="#1fa65a" stroke-width="2.8"/><path d="M15.16,11.87 A6.8,6.8 0 1 1 5.6,3.11" fill="none" stroke="#8bd35a" stroke-width="2.8"/><circle cx="9" cy="9" r="3" fill="#1fa65a"/></svg>
<div class="t" style="left:1892.2px;top:173.7px;width:43.6px;height:14px;font-size:14px;line-height:14px;letter-spacing:0.26px;color:#bbbbbb;text-align:center;transform:rotate(90deg);">Gradle</div>
<svg class="a" style="left:1907px;top:848px;width:15px;height:16px" width="16" height="18" viewBox="0 0 16 18"><g fill="#97c024"><path d="M3.5,7 a4.5,4.5 0 0 1 9,0 z"/><rect x="3.5" y="8" width="9" height="7" rx="1"/><rect x="0.5" y="8" width="2.2" height="6" rx="1.1"/><rect x="13.3" y="8" width="2.2" height="6" rx="1.1"/><rect x="5" y="14" width="2.2" height="4" rx="1"/><rect x="8.8" y="14" width="2.2" height="4" rx="1"/></g><circle cx="6.3" cy="5" r="0.8" fill="#3c3f41"/><circle cx="9.7" cy="5" r="0.8" fill="#3c3f41"/></svg>
<div class="t" style="left:1862.8px;top:912.3px;width:102.3px;height:14px;font-size:14px;line-height:14px;letter-spacing:0.93px;color:#bbbbbb;text-align:center;transform:rotate(90deg);">Android Model</div>
<div class="a" style="left:1278px;top:131px;width:619px;height:66px;background:#5b5b5b;border:1px solid #6d6d6d;border-radius:3px"></div>
<svg class="a" style="left:1286px;top:137px;" width="28" height="28" viewBox="0 0 28 28"><defs><radialGradient id="ig" cx="40%" cy="30%" r="70%"><stop offset="0" stop-color="#9fd0f5"/><stop offset="1" stop-color="#2f7fc4"/></radialGradient></defs><circle cx="14" cy="14" r="13.5" fill="url(#ig)" stroke="#d5e8f5" stroke-width="1"/><rect x="12" y="5.5" width="4" height="11" rx="1.5" fill="#fff"/><circle cx="14" cy="21" r="2.2" fill="#fff"/></svg>
<div class="t" style="left:1321.00px;top:138.00px;font-size:15px;color:#c8c8c8;letter-spacing:0.184px;font-weight:bold;">Help improve Android Studio by sending usage statistics to Google</div>
<div class="t" style="left:1321.60px;top:156.80px;font-size:15px;color:#bbbbbb;letter-spacing:-0.741px;">Please click</div>
<div class="t" style="left:1397.50px;top:156.80px;font-size:15px;color:#589df6;letter-spacing:0.292px;">I agree</div>
<div class="a" style="left:1397.5px;top:171.5px;width:49.4px;height:1px;background:#589df6;"></div>
<div class="t" style="left:1450.00px;top:156.80px;font-size:15px;color:#bbbbbb;letter-spacing:-0.068px;">if you want to help make Android Studio better or</div>
<div class="t" style="left:1776.20px;top:156.80px;font-size:15px;color:#589df6;letter-spacing:0.204px;">I don&#x27;t agree</div>
<div class="a" style="left:1776.2px;top:171.5px;width:86.4px;height:1px;background:#589df6;"></div>
<div class="t" style="left:1321.60px;top:175.80px;font-size:15px;color:#bbbbbb;letter-spacing:-0.456px;">otherwise.</div>
<div class="t" style="left:1392.00px;top:175.80px;font-size:15px;color:#589df6;letter-spacing:0.492px;">more...</div>
<div class="a" style="left:1392px;top:190.5px;width:50.6px;height:1px;background:#589df6;"></div>
<div class="a" style="left:503px;top:952px;width:1397px;height:2px;background:#2b2b2b;"></div>
<div class="a" style="left:503px;top:954px;width:1397px;height:3px;background:#4b4f51;"></div>
<div class="a" style="left:503px;top:957px;width:1397px;height:29px;background:#3c3f41;"></div>
<div class="a" style="left:503px;top:957px;width:9px;height:29px;background:#3c3f41;"></div>
<div class="a" style="left:512px;top:957px;width:1px;height:29px;background:#2b2b2b;"></div>
<div class="a" style="left:513px;top:957px;width:63px;height:29px;background:#4e5254;"></div>
<div class="a" style="left:576px;top:957px;width:1px;height:29px;background:#2b2b2b;"></div>
<div class="a" style="left:577px;top:957px;width:1323px;height:1px;background:#2b2b2b;"></div>
<div class="a" style="left:627px;top:957px;width:1px;height:29px;background:#2b2b2b;"></div>
<div class="t" style="left:522.90px;top:962.88px;font-size:15.5px;color:#bbbbbb;letter-spacing:-0.041px;">Design</div>
<div class="t" style="left:588.40px;top:962.88px;font-size:15.5px;color:#bbbbbb;letter-spacing:1.027px;">Text</div>
<div class="a" style="left:563px;top:936px;width:105px;height:63px;border:5px solid #ee1c24"></div>
<div class="a" style="left:9px;top:986px;width:1920px;height:1px;background:#2b2b2b;"></div>
<div class="a" style="left:9px;top:1013px;width:1920px;height:1px;background:#45474a;"></div>
<svg class="a" style="left:47px;top:993px;" width="16" height="16" viewBox="0 0 16 16"><rect x="0.5" y="0.5" width="15" height="15" fill="#000" stroke="#999"/><rect x="1" y="1" width="14" height="2.5" fill="#999"/><path d="M3,7 L5.5,9 L3,11 M7,11.5 H11" fill="none" stroke="#fff" stroke-width="1"/></svg>
<div class="t" style="left:67.10px;top:995.15px;font-size:14px;color:#bbbbbb;letter-spacing:0.769px;">Terminal</div>
<svg class="a" style="left:156.5px;top:992.5px;width:15px;height:16.5px" width="16" height="18" viewBox="0 0 16 18"><g fill="#97c024"><path d="M3.5,7 a4.5,4.5 0 0 1 9,0 z"/><rect x="3.5" y="8" width="9" height="7" rx="1"/><rect x="0.5" y="8" width="2.2" height="6" rx="1.1"/><rect x="13.3" y="8" width="2.2" height="6" rx="1.1"/><rect x="5" y="14" width="2.2" height="4" rx="1"/><rect x="8.8" y="14" width="2.2" height="4" rx="1"/></g><circle cx="6.3" cy="5" r="0.8" fill="#3c3f41"/><circle cx="9.7" cy="5" r="0.8" fill="#3c3f41"/></svg>
<div class="t" style="left:176.10px;top:995.15px;font-size:14px;color:#bbbbbb;letter-spacing:0.919px;">6: Android Monitor</div>
<div class="a" style="left:176.1px;top:1008px;width:7.8px;height:1px;background:#bbbbbb"></div>
<svg class="a" style="left:335px;top:993px;" width="15" height="16" viewBox="0 0 15 16"><rect x="0.5" y="0.5" width="14" height="15" fill="#e3ae62" stroke="#f3d29a" stroke-width="1"/><path d="M3,4.5 H12 M3,10 H12" stroke="#a87a3e" stroke-width="1.2"/><path d="M4,8 H11" stroke="#c79454" stroke-width="0.8"/></svg>
<div class="t" style="left:355.00px;top:995.15px;font-size:14px;color:#bbbbbb;letter-spacing:0.012px;">0: Messages</div>
<div class="a" style="left:355.0px;top:1008px;width:7.8px;height:1px;background:#bbbbbb"></div>
<svg class="a" style="left:460px;top:992px;" width="18" height="17" viewBox="0 0 18 17"><path d="M6,7 C6,2 16,2 16,7 Z" fill="#8a8a8a"/><rect x="6.5" y="6" width="9" height="7" rx="2" fill="#e0a468"/><circle cx="9.2" cy="9" r="0.7" fill="#5a3a1a"/><circle cx="12.8" cy="9" r="0.7" fill="#5a3a1a"/><path d="M5,17 V14.5 Q11,12 17,14.5 V17 Z" fill="#3b9ee0"/><circle cx="4" cy="4" r="3.8" fill="#f0f0f0" stroke="#666" stroke-width="0.6"/><path d="M2.2,3.2 H5.8 M2.2,5 H5.8" stroke="#555" stroke-width="0.8"/></svg>
<div class="t" style="left:481.40px;top:995.15px;font-size:14px;color:#bbbbbb;letter-spacing:0.107px;">TODO</div>
<svg class="a" style="left:1649px;top:993px;" width="16" height="15" viewBox="0 0 16 15"><path d="M1,1 H15 V10 H9 L6,14 V10 H1 z" fill="#777"/></svg>
<div class="t" style="left:1671.50px;top:995.15px;font-size:14px;color:#bbbbbb;letter-spacing:0.188px;">Event Log</div>
<svg class="a" style="left:1766px;top:993px;" width="15" height="16" viewBox="0 0 15 16"><rect x="0.5" y="0.5" width="14" height="15" fill="#6aa6d6" stroke="#4a86b6"/><rect x="3" y="5" width="9" height="7" fill="#3c3f41"/><rect x="4" y="7" width="7" height="2" fill="#6aa6d6"/></svg>
<div class="t" style="left:1785.90px;top:995.15px;font-size:14px;color:#bbbbbb;letter-spacing:0.308px;">Gradle Console</div>
<svg class="a" style="left:19px;top:1019px;" width="18" height="18" viewBox="0 0 18 18"><rect x="1" y="1" width="16" height="14" fill="#5e6060" stroke="#999" stroke-width="1.6"/><rect x="0" y="16.5" width="18" height="1.5" fill="#999"/></svg>
<div class="t" style="left:46.60px;top:1021.16px;font-size:16px;color:#bbbbbb;letter-spacing:0.050px;">Gradle build finished in 18s 737ms (16 minutes ago)</div>
<div class="t" style="left:1596.60px;top:1021.16px;font-size:16px;color:#bbbbbb;letter-spacing:-0.020px;">n/a</div>
<div class="t" style="left:1640.00px;top:1021.16px;font-size:16px;color:#bbbbbb;letter-spacing:0.080px;">n/a</div>
<div class="t" style="left:1677.60px;top:1021.16px;font-size:16px;color:#bbbbbb;letter-spacing:0.396px;">Context: &lt;no context&gt;</div>
<svg class="a" style="left:1875px;top:1023px;" width="12" height="11" viewBox="0 0 12 11"><path d="M2,5 V3 A3,3 0 0 1 8,3" fill="none" stroke="#999" stroke-width="1.4"/><rect x="3" y="5" width="9" height="6" fill="#999"/><rect x="7" y="7" width="2" height="2.5" fill="#3c3f41"/></svg>
<svg class="a" style="left:1905px;top:1020px;" width="15" height="18" viewBox="0 0 15 18"><path d="M2,7 C2,2 13,2 13,7 H15 V9 H0 V7 z M3,10 H12 C12,14 10,15 7.5,15 C5,15 3,14 3,10 z M2,18 C2,15 13,15 13,18 z" fill="#5e6060"/></svg>
</body></html>
